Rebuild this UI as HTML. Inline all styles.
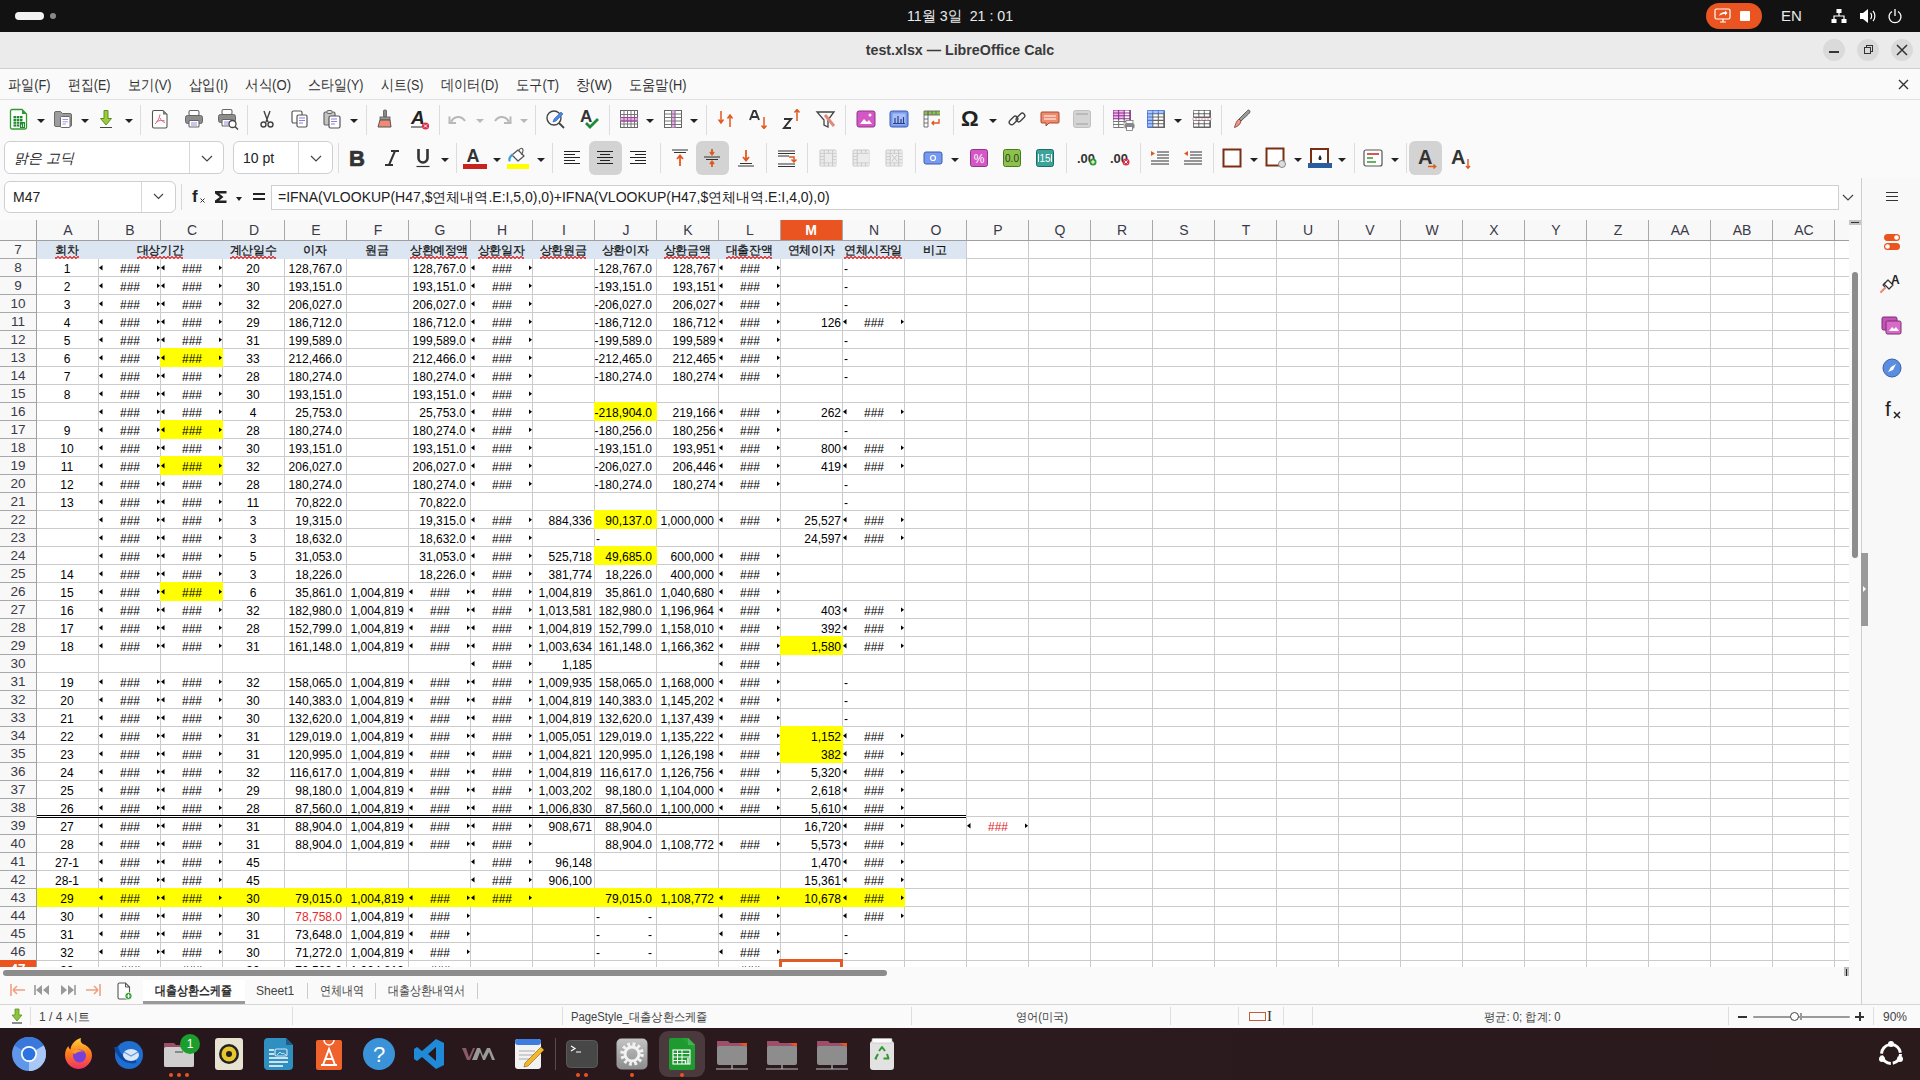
<!DOCTYPE html><html><head><meta charset="utf-8"><style>
*{box-sizing:border-box}
html,body{margin:0;padding:0}
body{width:1920px;height:1080px;overflow:hidden;position:relative;background:#fafafa;font-family:"Liberation Sans",sans-serif;color:#222}
.a{position:absolute}
.t{position:absolute;white-space:nowrap}
.cell{position:absolute;height:18px;line-height:18px;font-size:12px;color:#000;white-space:nowrap}
.tri{position:absolute;width:3.5px;height:5.5px;background:#000}
.tl{clip-path:polygon(0 50%,100% 0,100% 100%)}
.tr{clip-path:polygon(0 0,100% 50%,0 100%)}
.hl{position:absolute;height:1px;background:#cbcbcb}
.vl{position:absolute;width:1px;background:#cbcbcb}
.ch{position:absolute;top:220px;height:20px;line-height:20px;font-size:14px;color:#3a3a48;text-align:center}
.rh{position:absolute;left:0;width:36px;height:18px;line-height:18px;font-size:13.5px;color:#3a3a48;text-align:center}
.sq{position:relative;display:inline-block;line-height:18px}
.sq::after{content:"";position:absolute;left:0;right:0;top:15px;height:3px;background:linear-gradient(135deg,transparent 35%,#e23a3a 35%,#e23a3a 65%,transparent 65%) 0 0/4px 3px repeat-x,linear-gradient(45deg,transparent 35%,#e23a3a 35%,#e23a3a 65%,transparent 65%) 2px 0/4px 3px repeat-x;opacity:.9}
.menu{position:absolute;top:76px;font-size:14.5px;color:#333;line-height:18px}
</style></head><body>
<div class="a" style="left:0;top:0;width:1920px;height:32px;background:#121212"></div><div class="a" style="left:15px;top:12px;width:29px;height:8px;border-radius:4px;background:#f2f2f2"></div><div class="a" style="left:50px;top:13px;width:6px;height:6px;border-radius:3px;background:#8a8a8a"></div><div class="t" style="left:0;width:1920px;top:7px;text-align:center;font-size:15px;color:#eaeaea;line-height:18px;transform:scaleX(0.945)">11월 3일&nbsp; 21 : 01</div><div class="a" style="left:1706px;top:3px;width:56px;height:26px;border-radius:13px;background:#e95420"></div><div class="t" style="left:1781px;top:7px;font-size:15px;color:#eaeaea;line-height:18px">EN</div><svg class="a" style="left:1714.0px;top:8.0px" width="18" height="16" viewBox="0 0 18 16"><rect x="1" y="1" width="15" height="10" rx="1.5" fill="none" stroke="#fff" stroke-width="1.2"/><path d="M6 14h6M9 11v3" stroke="#fff" stroke-width="1.2"/><path d="M5 8c1-3 3-4 6-4v-1.5l2.5 2.5-2.5 2.5V6c-2 0-4 .5-6 2z" fill="#fff"/></svg><div class="a" style="left:1740px;top:11px;width:10px;height:10px;background:#fff;border-radius:1px"></div><svg class="a" style="left:1831.0px;top:8.0px" width="16" height="16" viewBox="0 0 16 16"><rect x="5.5" y="1" width="5" height="4" fill="#fff"/><rect x="0.5" y="11" width="5" height="4" fill="#fff"/><rect x="10.5" y="11" width="5" height="4" fill="#fff"/><path d="M8 5v3M3 11V8h10v3" stroke="#fff" stroke-width="1.2" fill="none"/></svg><svg class="a" style="left:1859.0px;top:8.0px" width="18" height="16" viewBox="0 0 18 16"><path d="M1 5h3l5-4v14l-5-4H1z" fill="#fff"/><path d="M11.5 5c1.5 1.5 1.5 4.5 0 6M14 3c2.5 2.5 2.5 7.5 0 10" stroke="#fff" stroke-width="1.2" fill="none"/></svg><svg class="a" style="left:1887.0px;top:8.0px" width="16" height="16" viewBox="0 0 16 16"><path d="M5 3.5a6 6 0 1 0 6 0" stroke="#fff" stroke-width="1.3" fill="none"/><path d="M8 1v7" stroke="#fff" stroke-width="1.3"/></svg><div class="a" style="left:0;top:32px;width:1920px;height:37px;background:#ebebeb;border-bottom:1px solid #cfcfcf"></div><div class="t" style="left:0;width:1920px;top:41px;text-align:center;font-size:15px;font-weight:bold;color:#3a3a3a;line-height:18px;transform:scaleX(0.95)">test.xlsx — LibreOffice Calc</div><div class="a" style="left:1823px;top:39px;width:22px;height:22px;border-radius:11px;background:#dadada"></div><div class="a" style="left:1857px;top:39px;width:22px;height:22px;border-radius:11px;background:#dadada"></div><div class="a" style="left:1891px;top:39px;width:22px;height:22px;border-radius:11px;background:#dadada"></div><div class="a" style="left:1829px;top:51px;width:10px;height:1.5px;background:#333"></div><div class="a" style="left:1866px;top:45px;width:7px;height:7px;border:1.3px solid #333"></div><div class="a" style="left:1864px;top:47px;width:7px;height:7px;border:1.3px solid #333;background:#dadada"></div><svg class="a" style="left:1896px;top:44px" width="12" height="12"><path d="M1 1L11 11M11 1L1 11" stroke="#333" stroke-width="1.5"/></svg><div class="a" style="left:0;top:69px;width:1920px;height:31px;background:#fafafa;border-bottom:1px solid #e2e2e2"></div><div class="menu" style="left:8px;transform:scaleX(0.876);transform-origin:0 0">파일(F)</div><div class="menu" style="left:68px;transform:scaleX(0.862);transform-origin:0 0">편집(E)</div><div class="menu" style="left:128px;transform:scaleX(0.882);transform-origin:0 0">보기(V)</div><div class="menu" style="left:189px;transform:scaleX(0.892);transform-origin:0 0">삽입(I)</div><div class="menu" style="left:245px;transform:scaleX(0.904);transform-origin:0 0">서식(O)</div><div class="menu" style="left:308px;transform:scaleX(0.863);transform-origin:0 0">스타일(Y)</div><div class="menu" style="left:381px;transform:scaleX(0.862);transform-origin:0 0">시트(S)</div><div class="menu" style="left:441px;transform:scaleX(0.883);transform-origin:0 0">데이터(D)</div><div class="menu" style="left:516px;transform:scaleX(0.887);transform-origin:0 0">도구(T)</div><div class="menu" style="left:576px;transform:scaleX(0.940);transform-origin:0 0">창(W)</div><div class="menu" style="left:629px;transform:scaleX(0.883);transform-origin:0 0">도움말(H)</div><svg class="a" style="left:1898px;top:79px" width="11" height="11"><path d="M1 1L10 10M10 1L1 10" stroke="#333" stroke-width="1.4"/></svg><svg class="a" style="left:9.0px;top:108.0px" width="20" height="22" viewBox="0 0 20 22"><path d="M3 1.5h10l4.5 4.5v13.5a1.5 1.5 0 0 1-1.5 1.5H3a1.5 1.5 0 0 1-1.5-1.5V3A1.5 1.5 0 0 1 3 1.5z" fill="#fff" stroke="#2f9a2f" stroke-width="1.3"/><path d="M13 1.5l4.5 4.5H13z" fill="#2f9a2f"/><rect x="4.5" y="8.0" width="2.6" height="2.2" fill="#1f8a2f"/><rect x="4.5" y="10.8" width="2.6" height="2.2" fill="#1f8a2f"/><rect x="4.5" y="13.6" width="2.6" height="2.2" fill="#1f8a2f"/><rect x="4.5" y="16.4" width="2.6" height="2.2" fill="#1f8a2f"/><rect x="7.7" y="8.0" width="2.6" height="2.2" fill="#1f8a2f"/><rect x="7.7" y="10.8" width="2.6" height="2.2" fill="#1f8a2f"/><rect x="7.7" y="13.6" width="2.6" height="2.2" fill="#1f8a2f"/><rect x="7.7" y="16.4" width="2.6" height="2.2" fill="#1f8a2f"/><rect x="10.9" y="8.0" width="2.6" height="2.2" fill="#1f8a2f"/><rect x="10.9" y="10.8" width="2.6" height="2.2" fill="#1f8a2f"/><rect x="10.9" y="13.6" width="2.6" height="2.2" fill="#1f8a2f"/><rect x="10.9" y="16.4" width="2.6" height="2.2" fill="#1f8a2f"/><rect x="11" y="14" width="5" height="6" fill="#1f8a2f"/><path d="M12.5 19v-2.5M14.5 19v-3.5" stroke="#fff" stroke-width="0.8"/></svg><div class="a" style="left:37px;top:119px;width:0;height:0;border-left:4px solid transparent;border-right:4px solid transparent;border-top:4px solid #222"></div><svg class="a" style="left:53.0px;top:109.0px" width="20" height="20" viewBox="0 0 20 20"><path d="M1.5 4a1.5 1.5 0 0 1 1.5-1.5h4.5l2 2H17a1.5 1.5 0 0 1 1.5 1.5v10a1.5 1.5 0 0 1-1.5 1.5H3A1.5 1.5 0 0 1 1.5 16z" fill="#9d9d9d" stroke="#6a6a6a" stroke-width="1"/><rect x="7.5" y="7.5" width="9.5" height="11" rx="1" fill="#fff" stroke="#6a6a6a" stroke-width="1"/><path d="M9.5 10.5h5.5M9.5 12.8h5.5M9.5 15h3.5" stroke="#8a7fd9" stroke-width="0.8"/></svg><div class="a" style="left:81px;top:119px;width:0;height:0;border-left:4px solid transparent;border-right:4px solid transparent;border-top:4px solid #222"></div><svg class="a" style="left:96.0px;top:109.0px" width="20" height="20" viewBox="0 0 20 20"><path d="M8 1.5h4v8h3.5L10 16 4.5 9.5H8z" fill="#9ccc3c" stroke="#5f8f26" stroke-width="1" stroke-linejoin="round"/><path d="M4 18.5h12" stroke="#444" stroke-width="1"/></svg><div class="a" style="left:125px;top:119px;width:0;height:0;border-left:4px solid transparent;border-right:4px solid transparent;border-top:4px solid #222"></div><div class="a" style="left:140px;top:105px;width:1px;height:30px;background:#dcdcdc"></div><svg class="a" style="left:151.0px;top:109.0px" width="18" height="20" viewBox="0 0 18 20"><path d="M3 1.5h9l4 4v12a1.5 1.5 0 0 1-1.5 1.5H3a1.5 1.5 0 0 1-1.5-1.5V3A1.5 1.5 0 0 1 3 1.5z" fill="#fff" stroke="#555" stroke-width="1.1"/><path d="M12 1.5v4h4z" fill="#777"/><path d="M9 5.5c-.5 3.5-2.5 7.5-5 9.5M9 9c1 2.5 3 4 5 4.5M5.5 12.5c2.5-1 5-1.2 8-.8" stroke="#e0607a" stroke-width="1" fill="none"/></svg><svg class="a" style="left:184.0px;top:109.0px" width="20" height="20" viewBox="0 0 20 20"><rect x="5" y="1.5" width="10" height="5" rx="1.5" fill="#fff" stroke="#666" stroke-width="1.1"/><rect x="1.5" y="6.5" width="17" height="8" rx="2" fill="#8d8d8d" stroke="#666"/><rect x="5" y="11.5" width="10" height="6.5" rx="1" fill="#fff" stroke="#666" stroke-width="1.1"/><path d="M7 14h6M7 16h6" stroke="#8a7fd9" stroke-width="0.9"/></svg><svg class="a" style="left:217.0px;top:108.0px" width="22" height="22" viewBox="0 0 22 22"><rect x="5" y="1.5" width="10" height="5" rx="1.5" fill="#fff" stroke="#666" stroke-width="1.1"/><rect x="1.5" y="6.5" width="17" height="8" rx="2" fill="#8d8d8d" stroke="#666"/><rect x="5" y="11.5" width="10" height="6.5" rx="1" fill="#fff" stroke="#666" stroke-width="1.1"/><path d="M7 14h6M7 16h6" stroke="#8a7fd9" stroke-width="0.9"/><circle cx="15.5" cy="16" r="3.5" fill="#fff" stroke="#444" stroke-width="1.3"/><path d="M18 18.5l3 3" stroke="#444" stroke-width="1.5"/></svg><div class="a" style="left:247px;top:105px;width:1px;height:30px;background:#dcdcdc"></div><svg class="a" style="left:259.0px;top:109.0px" width="16" height="20" viewBox="0 0 16 20"><path d="M5 2l4 11M11 2L7 13" stroke="#444" stroke-width="1.4"/><circle cx="4.5" cy="15.5" r="2.5" fill="none" stroke="#444" stroke-width="1.4"/><circle cx="11.5" cy="15.5" r="2.5" fill="none" stroke="#444" stroke-width="1.4"/></svg><svg class="a" style="left:290.0px;top:109.0px" width="20" height="20" viewBox="0 0 20 20"><rect x="2" y="2" width="10" height="12" rx="1.5" fill="#fff" stroke="#555" stroke-width="1.2"/><rect x="7" y="6" width="10" height="12" rx="1.5" fill="#fff" stroke="#555" stroke-width="1.2"/><path d="M9 9h6M9 11.5h6M9 14h4" stroke="#8a7fd9" stroke-width="1"/></svg><svg class="a" style="left:322.0px;top:109.0px" width="20" height="20" viewBox="0 0 20 20"><rect x="2" y="3" width="11" height="13" rx="1.5" fill="#c4c4c4" stroke="#666" stroke-width="1.2"/><rect x="5" y="1.5" width="5" height="3" rx="1" fill="#ddd" stroke="#666"/><rect x="7" y="7" width="11" height="12" rx="1.5" fill="#fff" stroke="#555" stroke-width="1.2"/><path d="M9 10h6M9 12.5h6M9 15h4" stroke="#8a7fd9" stroke-width="1"/></svg><div class="a" style="left:350px;top:119px;width:0;height:0;border-left:4px solid transparent;border-right:4px solid transparent;border-top:4px solid #222"></div><div class="a" style="left:366px;top:105px;width:1px;height:30px;background:#dcdcdc"></div><svg class="a" style="left:376.0px;top:109.0px" width="18" height="20" viewBox="0 0 18 20"><rect x="7.5" y="1" width="3" height="7" rx="1" fill="#888" stroke="#555" stroke-width="0.8"/><rect x="4" y="8" width="10" height="3" fill="#999" stroke="#555" stroke-width="0.8"/><path d="M4 11h10l1 7H2z" fill="#ef8a74" stroke="#555" stroke-width="1"/></svg><svg class="a" style="left:409.0px;top:107.0px" width="22" height="24" viewBox="0 0 22 24"><text x="2" y="17" font-size="19" font-weight="bold" font-style="italic" fill="#222" font-family="Liberation Sans">A</text><path d="M2 20h11" stroke="#222" stroke-width="1"/><circle cx="16.5" cy="19" r="3.6" fill="#d9304b"/><path d="M15 17.5l3 3M18 17.5l-3 3" stroke="#fff" stroke-width="1"/></svg><div class="a" style="left:439px;top:105px;width:1px;height:30px;background:#dcdcdc"></div><svg class="a" style="left:448.0px;top:111.0px" width="20" height="16" viewBox="0 0 20 16"><path d="M3 11c3-6 10-7 14-1" stroke="#b8b8b8" stroke-width="2" fill="none"/><path d="M1.5 5.5v6.5h6.5" stroke="#b8b8b8" stroke-width="2" fill="none"/></svg><div class="a" style="left:476px;top:119px;width:0;height:0;border-left:4px solid transparent;border-right:4px solid transparent;border-top:4px solid #b8b8b8"></div><svg class="a" style="left:492.0px;top:111.0px" width="20" height="16" viewBox="0 0 20 16"><path d="M17 11c-3-6-10-7-14-1" stroke="#b8b8b8" stroke-width="2" fill="none"/><path d="M18.5 5.5v6.5h-6.5" stroke="#b8b8b8" stroke-width="2" fill="none"/></svg><div class="a" style="left:520px;top:119px;width:0;height:0;border-left:4px solid transparent;border-right:4px solid transparent;border-top:4px solid #b8b8b8"></div><div class="a" style="left:535px;top:105px;width:1px;height:30px;background:#dcdcdc"></div><svg class="a" style="left:545.0px;top:108.0px" width="22" height="22" viewBox="0 0 22 22"><circle cx="9" cy="10" r="7" fill="none" stroke="#444" stroke-width="1.4"/><path d="M14 15l5 5" stroke="#444" stroke-width="1.8"/><path d="M9 11l7-7 2 2-7 7-3 1z" fill="#4a86e8" stroke="#2a5bb0" stroke-width="0.6"/></svg><svg class="a" style="left:579.0px;top:107.0px" width="22" height="24" viewBox="0 0 22 24"><text x="1" y="15" font-size="17" font-weight="bold" fill="#333" font-family="Liberation Sans">A</text><path d="M7 16l4 4 8-8" stroke="#1f8a3a" stroke-width="2.8" fill="none"/></svg><div class="a" style="left:609px;top:105px;width:1px;height:30px;background:#dcdcdc"></div><svg class="a" style="left:619.0px;top:109.0px" width="20" height="20" viewBox="0 0 20 20"><rect x="1.5" y="1.5" width="17" height="17" fill="#fff" stroke="#666"/><rect x="1.5" y="8" width="17" height="4.5" fill="#f2a6f2"/><path d="M1.5 5.5h17M1.5 8.5h17M1.5 12h17M1.5 15h17M5 1.5v17M8.5 1.5v17M12 1.5v17M15.5 1.5v17" stroke="#777" stroke-width="1" fill="none"/><path d="M1.5 8.5h17M1.5 12h17" stroke="#a040a0" stroke-width="1"/></svg><div class="a" style="left:646px;top:119px;width:0;height:0;border-left:4px solid transparent;border-right:4px solid transparent;border-top:4px solid #222"></div><svg class="a" style="left:663.0px;top:109.0px" width="20" height="20" viewBox="0 0 20 20"><rect x="1.5" y="1.5" width="17" height="17" fill="#fff" stroke="#666"/><rect x="8" y="1.5" width="4.5" height="17" fill="#f2a6f2"/><path d="M1.5 5h17M1.5 8.5h17M1.5 12h17M1.5 15.5h17M8.5 1.5v17M12 1.5v17" stroke="#777" stroke-width="1" fill="none"/></svg><div class="a" style="left:690px;top:119px;width:0;height:0;border-left:4px solid transparent;border-right:4px solid transparent;border-top:4px solid #222"></div><div class="a" style="left:706px;top:105px;width:1px;height:30px;background:#dcdcdc"></div><svg class="a" style="left:717.0px;top:109.0px" width="18" height="20" viewBox="0 0 18 20"><path d="M4 2v11M1.5 10.5L4 14l2.5-3.5M13 18V7M10.5 9.5L13 6l2.5 3.5" stroke="#e2581f" stroke-width="1.5" fill="none"/></svg><svg class="a" style="left:749.0px;top:109.0px" width="20" height="20" viewBox="0 0 20 20"><path d="M1 11L4.5 2h2L10 11M3 8h5" stroke="#333" stroke-width="1.9" fill="none"/><path d="M15 8v11M12.5 16.5L15 19.5l2.5-3" stroke="#e2581f" stroke-width="1.5" fill="none"/></svg><svg class="a" style="left:782.0px;top:109.0px" width="20" height="20" viewBox="0 0 20 20"><path d="M2 10h7L2 19h7" stroke="#333" stroke-width="2" fill="none"/><path d="M15 12V1M12.5 3.5L15 0.5l2.5 3" stroke="#e2581f" stroke-width="1.5" fill="none"/></svg><svg class="a" style="left:815.0px;top:109.0px" width="22" height="20" viewBox="0 0 22 20"><path d="M2 3h17l-6 8v7l-4-2v-5z" fill="none" stroke="#444" stroke-width="1.3"/><path d="M10 6l9 11" stroke="#e08b7a" stroke-width="3"/></svg><div class="a" style="left:845px;top:105px;width:1px;height:30px;background:#dcdcdc"></div><svg class="a" style="left:856.0px;top:109.0px" width="20" height="20" viewBox="0 0 20 20"><rect x="1" y="2" width="18" height="16" rx="2" fill="#d557c6" stroke="#8e3685"/><path d="M4 15l4-5 3 3 2-2 3 4z" fill="#fff"/><circle cx="14" cy="6" r="1.5" fill="#fff"/></svg><svg class="a" style="left:889.0px;top:109.0px" width="20" height="20" viewBox="0 0 20 20"><rect x="1" y="2" width="18" height="16" rx="2" fill="#7799ee" stroke="#3d5bb5"/><rect x="3.5" y="4.5" width="13" height="11" fill="#a9c0f7"/><path d="M6 14V9M9 14V7M12 14v-4M14.5 14V8M4 14.5h12" stroke="#2a3f8a" stroke-width="1.2"/></svg><svg class="a" style="left:922.0px;top:109.0px" width="20" height="20" viewBox="0 0 20 20"><path d="M2 2h16v4H2z" fill="#8bc34a"/><path d="M2 2h16M2 6h16M6 2v4M10 2v4M14 2v4M2 2v16M6 2v16" stroke="#666" stroke-width="0.9" fill="none"/><path d="M2 10h4M2 14h4M2 18h4" stroke="#666" stroke-width="0.9"/><path d="M17 10v4h-7M12 12l-2 2 2 2" stroke="#e2581f" stroke-width="1.4" fill="none"/></svg><div class="a" style="left:953px;top:105px;width:1px;height:30px;background:#dcdcdc"></div><div class="t" style="left:961px;top:107px;font-size:22px;font-weight:bold;color:#222;line-height:24px">Ω</div><div class="a" style="left:989px;top:119px;width:0;height:0;border-left:4px solid transparent;border-right:4px solid transparent;border-top:4px solid #222"></div><svg class="a" style="left:1007.0px;top:109.0px" width="20" height="20" viewBox="0 0 20 20"><rect x="1.5" y="9" width="10" height="5" rx="2.5" transform="rotate(-45 6.5 11.5)" fill="none" stroke="#444" stroke-width="1.4"/><rect x="8.5" y="6" width="10" height="5" rx="2.5" transform="rotate(-45 13.5 8.5)" fill="none" stroke="#444" stroke-width="1.4"/></svg><svg class="a" style="left:1040.0px;top:109.0px" width="20" height="20" viewBox="0 0 20 20"><path d="M2 3h16a1 1 0 0 1 1 1v9a1 1 0 0 1-1 1H9l-3 3v-3H2a1 1 0 0 1-1-1V4a1 1 0 0 1 1-1z" fill="#f08a6c" stroke="#a5492e"/><path d="M4 7h12M4 10h12" stroke="#fff" stroke-width="1.2"/></svg><svg class="a" style="left:1073.0px;top:110.0px" width="18" height="18" viewBox="0 0 18 18"><rect x="0.5" y="0.5" width="17" height="17" rx="2" fill="#d4d4d4" stroke="#c0c0c0"/><path d="M3 4h12M3 14h12" stroke="#b0b0b0" stroke-width="1.5"/></svg><div class="a" style="left:1103px;top:105px;width:1px;height:30px;background:#dcdcdc"></div><svg class="a" style="left:1112.0px;top:108.5px" width="24" height="23" viewBox="0 0 24 23"><rect x="1" y="1" width="17.8" height="18" rx="1" fill="#777"/><rect x="1" y="1" width="17.8" height="10" fill="#8a2c8a" opacity="0.85"/><rect x="1.5" y="1.5" width="4.6" height="1.9" rx="0.5" fill="#f4b0f4"/><rect x="7.1" y="1.5" width="4.6" height="1.9" rx="0.5" fill="#f4b0f4"/><rect x="12.7" y="1.5" width="4.6" height="1.9" rx="0.5" fill="#fff"/><rect x="1.5" y="4.4" width="4.6" height="1.9" rx="0.5" fill="#f4b0f4"/><rect x="7.1" y="4.4" width="4.6" height="1.9" rx="0.5" fill="#f4b0f4"/><rect x="12.7" y="4.4" width="4.6" height="1.9" rx="0.5" fill="#fff"/><rect x="1.5" y="7.3" width="4.6" height="1.9" rx="0.5" fill="#f4b0f4"/><rect x="7.1" y="7.3" width="4.6" height="1.9" rx="0.5" fill="#f4b0f4"/><rect x="12.7" y="7.3" width="4.6" height="1.9" rx="0.5" fill="#fff"/><rect x="1.5" y="10.2" width="4.6" height="1.9" rx="0.5" fill="#fff"/><rect x="7.1" y="10.2" width="4.6" height="1.9" rx="0.5" fill="#fff"/><rect x="12.7" y="10.2" width="4.6" height="1.9" rx="0.5" fill="#fff"/><rect x="1.5" y="13.1" width="4.6" height="1.9" rx="0.5" fill="#fff"/><rect x="7.1" y="13.1" width="4.6" height="1.9" rx="0.5" fill="#fff"/><rect x="12.7" y="13.1" width="4.6" height="1.9" rx="0.5" fill="#fff"/><rect x="1.5" y="16.0" width="4.6" height="1.9" rx="0.5" fill="#fff"/><rect x="7.1" y="16.0" width="4.6" height="1.9" rx="0.5" fill="#fff"/><rect x="12.7" y="16.0" width="4.6" height="1.9" rx="0.5" fill="#fff"/><rect x="12" y="14" width="11" height="6" rx="2" fill="#888" stroke="#fff" stroke-width="0.8"/><rect x="14" y="11.5" width="7" height="3" fill="#fff" stroke="#777" stroke-width="0.8"/><rect x="14.5" y="17.5" width="6" height="4" fill="#fff" stroke="#777" stroke-width="0.8"/></svg><svg class="a" style="left:1146.0px;top:109.0px" width="20" height="20" viewBox="0 0 20 20"><rect x="1" y="1" width="18" height="18" rx="1" fill="#4a72d8"/><rect x="6.5" y="4.5" width="12.5" height="14.5" fill="#666"/><rect x="1.8" y="1.8" width="4.5" height="2.35" rx="0.4" fill="#a9c6f7"/><rect x="7.3" y="1.8" width="4.5" height="2.35" rx="0.4" fill="#a9c6f7"/><rect x="12.8" y="1.8" width="4.5" height="2.35" rx="0.4" fill="#a9c6f7"/><rect x="1.8" y="5.2" width="4.5" height="2.35" rx="0.4" fill="#a9c6f7"/><rect x="7.3" y="5.2" width="4.5" height="2.35" rx="0.4" fill="#fff"/><rect x="12.8" y="5.2" width="4.5" height="2.35" rx="0.4" fill="#fff"/><rect x="1.8" y="8.5" width="4.5" height="2.35" rx="0.4" fill="#a9c6f7"/><rect x="7.3" y="8.5" width="4.5" height="2.35" rx="0.4" fill="#fff"/><rect x="12.8" y="8.5" width="4.5" height="2.35" rx="0.4" fill="#fff"/><rect x="1.8" y="11.9" width="4.5" height="2.35" rx="0.4" fill="#a9c6f7"/><rect x="7.3" y="11.9" width="4.5" height="2.35" rx="0.4" fill="#fff"/><rect x="12.8" y="11.9" width="4.5" height="2.35" rx="0.4" fill="#fff"/><rect x="1.8" y="15.2" width="4.5" height="2.35" rx="0.4" fill="#a9c6f7"/><rect x="7.3" y="15.2" width="4.5" height="2.35" rx="0.4" fill="#fff"/><rect x="12.8" y="15.2" width="4.5" height="2.35" rx="0.4" fill="#fff"/></svg><div class="a" style="left:1174px;top:119px;width:0;height:0;border-left:4px solid transparent;border-right:4px solid transparent;border-top:4px solid #222"></div><svg class="a" style="left:1192.0px;top:109.0px" width="20" height="20" viewBox="0 0 20 20"><rect x="1" y="1" width="18" height="8" rx="1" fill="#666"/><rect x="1" y="11" width="18" height="8" rx="1" fill="#666"/><rect x="1.8" y="1.8" width="4.5" height="2.4" rx="0.4" fill="#fff"/><rect x="7.3" y="1.8" width="4.5" height="2.4" rx="0.4" fill="#fff"/><rect x="12.8" y="1.8" width="4.5" height="2.4" rx="0.4" fill="#fff"/><rect x="1.8" y="5.2" width="4.5" height="2.4" rx="0.4" fill="#fff"/><rect x="7.3" y="5.2" width="4.5" height="2.4" rx="0.4" fill="#fff"/><rect x="12.8" y="5.2" width="4.5" height="2.4" rx="0.4" fill="#fff"/><rect x="1.8" y="11.8" width="4.5" height="2.4" rx="0.4" fill="#fff"/><rect x="7.3" y="11.8" width="4.5" height="2.4" rx="0.4" fill="#fff"/><rect x="12.8" y="11.8" width="4.5" height="2.4" rx="0.4" fill="#fff"/><rect x="1.8" y="15.2" width="4.5" height="2.4" rx="0.4" fill="#fff"/><rect x="7.3" y="15.2" width="4.5" height="2.4" rx="0.4" fill="#fff"/><rect x="12.8" y="15.2" width="4.5" height="2.4" rx="0.4" fill="#fff"/><path d="M0 10h20" stroke="#e88aa8" stroke-width="0.9" stroke-dasharray="2 1"/></svg><div class="a" style="left:1221px;top:105px;width:1px;height:30px;background:#dcdcdc"></div><svg class="a" style="left:1232.0px;top:109.0px" width="20" height="20" viewBox="0 0 20 20"><path d="M17.5 1.5c1 1 .5 2-1 3.5L9 12l-2-2 7.5-7.5c1.5-1.5 2-2 3-1z" fill="#9a9a9a" stroke="#555" stroke-width="0.9"/><path d="M7 10l2 2c-.5 3-3 5.5-6.5 6.5C3.5 15 4.5 11.5 7 10z" fill="#f09888" stroke="#7a3a2a" stroke-width="0.8"/></svg><div class="a" style="left:4px;top:141px;width:220px;height:33px;border:1px solid #cfcfcf;border-radius:6px;background:#fff"></div><div class="a" style="left:189px;top:142px;width:1px;height:31px;background:#d8d8d8"></div><div class="t" style="left:14px;top:149px;font-size:14px;color:#222;line-height:18px;font-style:italic">맑은 고딕</div><svg class="a" style="left:201px;top:155px" width="12" height="7"><path d="M1 1L6 6L11 1" stroke="#444" stroke-width="1.2" fill="none"/></svg><div class="a" style="left:233px;top:141px;width:100px;height:33px;border:1px solid #cfcfcf;border-radius:6px;background:#fff"></div><div class="a" style="left:298px;top:142px;width:1px;height:31px;background:#d8d8d8"></div><div class="t" style="left:243px;top:149px;font-size:14px;color:#222;line-height:18px">10 pt</div><svg class="a" style="left:310px;top:155px" width="12" height="7"><path d="M1 1L6 6L11 1" stroke="#444" stroke-width="1.2" fill="none"/></svg><div class="a" style="left:338px;top:143px;width:1px;height:30px;background:#dcdcdc"></div><svg class="a" style="left:347.0px;top:146.0px" width="22" height="24" viewBox="0 0 22 24"><text x="2" y="19.5" font-size="22" font-weight="bold" fill="#333" stroke="#333" stroke-width="0.7" font-family="Liberation Sans">B</text></svg><svg class="a" style="left:383.0px;top:148.0px" width="18" height="20" viewBox="0 0 18 20"><path d="M8 3h8M2 17h8M12 3L6 17" stroke="#333" stroke-width="2" fill="none"/></svg><svg class="a" style="left:415.0px;top:147.0px" width="16" height="22" viewBox="0 0 16 22"><path d="M3.5 2v9a4.5 4.5 0 0 0 9 0V2" stroke="#333" stroke-width="2.6" fill="none"/><path d="M1.5 19.5h13" stroke="#333" stroke-width="1.2"/></svg><div class="a" style="left:441px;top:158px;width:0;height:0;border-left:4px solid transparent;border-right:4px solid transparent;border-top:4px solid #222"></div><div class="a" style="left:456px;top:143px;width:1px;height:30px;background:#dcdcdc"></div><svg class="a" style="left:463.0px;top:146.0px" width="24" height="24" viewBox="0 0 24 24"><text x="3.5" y="16" font-size="18" font-weight="bold" fill="#333" font-family="Liberation Sans">A</text><rect x="0" y="18" width="24" height="5" fill="#c9211e"/></svg><div class="a" style="left:493px;top:158px;width:0;height:0;border-left:4px solid transparent;border-right:4px solid transparent;border-top:4px solid #222"></div><svg class="a" style="left:506.0px;top:146.0px" width="24" height="24" viewBox="0 0 24 24"><path d="M6 9l6-5 6 6-6 5z" fill="#fff" stroke="#555" stroke-width="1.3" stroke-linejoin="round"/><path d="M13 4.5c1-3 4-3 4 0s-2 4-2 4" stroke="#555" stroke-width="1.1" fill="none"/><path d="M6 9c-2 1.5-3 3.5-2.5 5.5" stroke="#3aa1d8" stroke-width="2.2" fill="none" stroke-linecap="round"/><rect x="1" y="18" width="22" height="5" fill="#ffff00"/></svg><div class="a" style="left:537px;top:158px;width:0;height:0;border-left:4px solid transparent;border-right:4px solid transparent;border-top:4px solid #222"></div><div class="a" style="left:552px;top:143px;width:1px;height:30px;background:#dcdcdc"></div><svg class="a" style="left:563.0px;top:149.0px" width="18" height="18" viewBox="0 0 18 18"><path d="M1 2.5h16" stroke="#222" stroke-width="1"/><path d="M1 5.5h11" stroke="#222" stroke-width="1"/><path d="M1 8.5h16" stroke="#222" stroke-width="1"/><path d="M1 11.5h11" stroke="#222" stroke-width="1"/><path d="M1 14.5h16" stroke="#222" stroke-width="1"/></svg><div class="a" style="left:589px;top:141px;width:33px;height:34px;border-radius:6px;background:#d3d3d3"></div><svg class="a" style="left:596.0px;top:149.0px" width="18" height="18" viewBox="0 0 18 18"><path d="M1 2.5h16" stroke="#222" stroke-width="1"/><path d="M4 5.5h10" stroke="#222" stroke-width="1"/><path d="M1 8.5h16" stroke="#222" stroke-width="1"/><path d="M4 11.5h10" stroke="#222" stroke-width="1"/><path d="M1 14.5h16" stroke="#222" stroke-width="1"/></svg><svg class="a" style="left:629.0px;top:149.0px" width="18" height="18" viewBox="0 0 18 18"><path d="M1 2.5h16" stroke="#222" stroke-width="1"/><path d="M6 5.5h11" stroke="#222" stroke-width="1"/><path d="M1 8.5h16" stroke="#222" stroke-width="1"/><path d="M6 11.5h11" stroke="#222" stroke-width="1"/><path d="M1 14.5h16" stroke="#222" stroke-width="1"/></svg><div class="a" style="left:660px;top:143px;width:1px;height:30px;background:#dcdcdc"></div><svg class="a" style="left:670.0px;top:148.0px" width="20" height="20" viewBox="0 0 20 20"><path d="M2 2h16M4 4.5h12" stroke="#333" stroke-width="1.2"/><path d="M10 18V8M7 11l3-3.5 3 3.5" stroke="#e2581f" stroke-width="1.8" fill="none"/></svg><div class="a" style="left:696px;top:141px;width:33px;height:34px;border-radius:6px;background:#d3d3d3"></div><svg class="a" style="left:702.0px;top:147.0px" width="20" height="22" viewBox="0 0 20 22"><path d="M2 10h16M4 12.5h12" stroke="#333" stroke-width="1.2"/><path d="M10 2v5M8 5l2 2.5 2-2.5M10 20v-5M8 17l2-2.5 2 2.5" stroke="#e2581f" stroke-width="1.8" fill="none"/></svg><svg class="a" style="left:736.0px;top:148.0px" width="20" height="20" viewBox="0 0 20 20"><path d="M2 18h16M4 15.5h12" stroke="#333" stroke-width="1.2"/><path d="M10 2v10M7 9l3 3.5 3-3.5" stroke="#e2581f" stroke-width="1.8" fill="none"/></svg><div class="a" style="left:766px;top:143px;width:1px;height:30px;background:#dcdcdc"></div><svg class="a" style="left:777.0px;top:148.0px" width="20" height="20" viewBox="0 0 20 20"><path d="M1 3h17M1 5.5h17M1 8h11M1 16h17M1 18.5h17" stroke="#333" stroke-width="1.1"/><path d="M12 9h5v4M14.5 11.5l2.5 2.5 2.5-2.5" stroke="#e2581f" stroke-width="1.5" fill="none"/></svg><div class="a" style="left:807px;top:143px;width:1px;height:30px;background:#dcdcdc"></div><svg class="a" style="left:819.0px;top:149.0px" width="18" height="18" viewBox="0 0 18 18"><rect x="0.5" y="0.5" width="17" height="17" rx="1.5" fill="#c8c8c8"/><rect x="1.5" y="1.5" width="3.2" height="2.4" fill="#ececec"/><rect x="5.7" y="1.5" width="3.2" height="2.4" fill="#ececec"/><rect x="9.9" y="1.5" width="3.2" height="2.4" fill="#ececec"/><rect x="14.1" y="1.5" width="3.2" height="2.4" fill="#ececec"/><rect x="1.5" y="4.7" width="3.2" height="2.4" fill="#ececec"/><rect x="14.1" y="4.7" width="3.2" height="2.4" fill="#ececec"/><rect x="1.5" y="7.9" width="3.2" height="2.4" fill="#ececec"/><rect x="14.1" y="7.9" width="3.2" height="2.4" fill="#ececec"/><rect x="1.5" y="11.1" width="3.2" height="2.4" fill="#ececec"/><rect x="14.1" y="11.1" width="3.2" height="2.4" fill="#ececec"/><rect x="1.5" y="14.3" width="3.2" height="2.4" fill="#ececec"/><rect x="5.7" y="14.3" width="3.2" height="2.4" fill="#ececec"/><rect x="9.9" y="14.3" width="3.2" height="2.4" fill="#ececec"/><rect x="14.1" y="14.3" width="3.2" height="2.4" fill="#ececec"/><rect x="5.7" y="4.7" width="7.4" height="8.8" fill="#ececec"/></svg><svg class="a" style="left:852.0px;top:149.0px" width="18" height="18" viewBox="0 0 18 18"><rect x="0.5" y="0.5" width="17" height="17" rx="1.5" fill="#c8c8c8"/><rect x="1.5" y="1.5" width="3.2" height="2.4" fill="#ececec"/><rect x="5.7" y="1.5" width="3.2" height="2.4" fill="#ececec"/><rect x="9.9" y="1.5" width="3.2" height="2.4" fill="#ececec"/><rect x="14.1" y="1.5" width="3.2" height="2.4" fill="#ececec"/><rect x="1.5" y="4.7" width="3.2" height="2.4" fill="#ececec"/><rect x="1.5" y="7.9" width="3.2" height="2.4" fill="#ececec"/><rect x="1.5" y="11.1" width="3.2" height="2.4" fill="#ececec"/><rect x="1.5" y="14.3" width="3.2" height="2.4" fill="#ececec"/><rect x="5.7" y="14.3" width="3.2" height="2.4" fill="#ececec"/><rect x="9.9" y="14.3" width="3.2" height="2.4" fill="#ececec"/><rect x="14.1" y="14.3" width="3.2" height="2.4" fill="#ececec"/><rect x="5.7" y="4.7" width="11.6" height="8.8" fill="#ececec"/></svg><svg class="a" style="left:885.0px;top:149.0px" width="18" height="18" viewBox="0 0 18 18"><rect x="0.5" y="0.5" width="17" height="17" rx="1.5" fill="#c8c8c8"/><rect x="1.5" y="1.5" width="3.2" height="2.4" fill="#ececec"/><rect x="5.7" y="1.5" width="3.2" height="2.4" fill="#ececec"/><rect x="9.9" y="1.5" width="3.2" height="2.4" fill="#ececec"/><rect x="14.1" y="1.5" width="3.2" height="2.4" fill="#ececec"/><rect x="1.5" y="4.7" width="3.2" height="2.4" fill="#ececec"/><rect x="14.1" y="4.7" width="3.2" height="2.4" fill="#ececec"/><rect x="1.5" y="7.9" width="3.2" height="2.4" fill="#ececec"/><rect x="14.1" y="7.9" width="3.2" height="2.4" fill="#ececec"/><rect x="1.5" y="11.1" width="3.2" height="2.4" fill="#ececec"/><rect x="14.1" y="11.1" width="3.2" height="2.4" fill="#ececec"/><rect x="1.5" y="14.3" width="3.2" height="2.4" fill="#ececec"/><rect x="5.7" y="14.3" width="3.2" height="2.4" fill="#ececec"/><rect x="9.9" y="14.3" width="3.2" height="2.4" fill="#ececec"/><rect x="14.1" y="14.3" width="3.2" height="2.4" fill="#ececec"/><rect x="5.7" y="4.7" width="7.4" height="8.8" fill="#ececec"/><path d="M7 6l5 6M12 6l-5 6" stroke="#c8c8c8" stroke-width="1"/></svg><div class="a" style="left:915px;top:143px;width:1px;height:30px;background:#dcdcdc"></div><svg class="a" style="left:923.0px;top:151.0px" width="20" height="14" viewBox="0 0 20 14"><rect x="1" y="1" width="18" height="12" rx="2" fill="#7799ee" stroke="#3d5bb5"/><circle cx="10" cy="7" r="2.5" fill="none" stroke="#fff" stroke-width="1.2"/></svg><div class="a" style="left:951px;top:158px;width:0;height:0;border-left:4px solid transparent;border-right:4px solid transparent;border-top:4px solid #222"></div><svg class="a" style="left:970.0px;top:149.0px" width="18" height="18" viewBox="0 0 18 18"><rect x="0.5" y="0.5" width="17" height="17" rx="2" fill="#d557c6" stroke="#8e3685"/><text x="9" y="13.5" font-size="12" fill="#fff" text-anchor="middle" font-family="Liberation Sans">%</text></svg><svg class="a" style="left:1003.0px;top:149.0px" width="18" height="18" viewBox="0 0 18 18"><rect x="0.5" y="0.5" width="17" height="17" rx="2" fill="#8bc34a" stroke="#4d7a1f"/><text x="9" y="13" font-size="10" fill="#333" text-anchor="middle" font-family="Liberation Sans">0.0</text></svg><svg class="a" style="left:1036.0px;top:149.0px" width="18" height="18" viewBox="0 0 18 18"><rect x="0.5" y="0.5" width="17" height="17" rx="2" fill="#3aa39a" stroke="#1f6b64"/><text x="9" y="13" font-size="10" fill="#fff" text-anchor="middle" font-family="Liberation Sans">15</text><path d="M2.5 5v8M15.5 5v8" stroke="#fff"/></svg><div class="a" style="left:1066px;top:143px;width:1px;height:30px;background:#dcdcdc"></div><svg class="a" style="left:1076.0px;top:149.0px" width="22" height="18" viewBox="0 0 22 18"><text x="1" y="14" font-size="13" font-weight="bold" fill="#333" font-family="Liberation Sans">.00</text><circle cx="17" cy="13" r="3.5" fill="#2f9a2f"/><path d="M15 13h4M17 11v4" stroke="#fff" stroke-width="1.1"/></svg><svg class="a" style="left:1109.0px;top:149.0px" width="22" height="18" viewBox="0 0 22 18"><text x="1" y="14" font-size="13" font-weight="bold" fill="#333" font-family="Liberation Sans">.00</text><circle cx="17" cy="13" r="3.5" fill="#d9304b"/><path d="M15.5 11.5l3 3M18.5 11.5l-3 3" stroke="#fff" stroke-width="1"/></svg><div class="a" style="left:1140px;top:143px;width:1px;height:30px;background:#dcdcdc"></div><svg class="a" style="left:1150.0px;top:149.0px" width="20" height="18" viewBox="0 0 20 18"><path d="M1 2l4 2.5L1 7z" fill="#e2581f"/><path d="M7 3h12M7 6h12M7 9h12M1 12h18M1 15h18" stroke="#333" stroke-width="1.2"/></svg><svg class="a" style="left:1183.0px;top:149.0px" width="20" height="18" viewBox="0 0 20 18"><path d="M5 2L1 4.5 5 7z" fill="#e2581f"/><path d="M7 3h12M7 6h12M7 9h12M1 12h18M1 15h18" stroke="#333" stroke-width="1.2"/></svg><div class="a" style="left:1213px;top:143px;width:1px;height:30px;background:#dcdcdc"></div><svg class="a" style="left:1222.0px;top:148.0px" width="20" height="20" viewBox="0 0 20 20"><rect x="1.5" y="1.5" width="17" height="17" fill="#fff" stroke="#7a2e12" stroke-width="2"/></svg><div class="a" style="left:1250px;top:158px;width:0;height:0;border-left:4px solid transparent;border-right:4px solid transparent;border-top:4px solid #222"></div><svg class="a" style="left:1265.0px;top:147.0px" width="22" height="22" viewBox="0 0 22 22"><rect x="1.5" y="1.5" width="17" height="17" fill="#fff" stroke="#7a2e12" stroke-width="2"/><circle cx="17" cy="17" r="3.5" fill="#ddd" stroke="#888"/></svg><div class="a" style="left:1294px;top:158px;width:0;height:0;border-left:4px solid transparent;border-right:4px solid transparent;border-top:4px solid #222"></div><svg class="a" style="left:1308.0px;top:147.0px" width="24" height="22" viewBox="0 0 24 22"><path d="M3 16V2h17v14" fill="#fff" stroke="#7a2e12" stroke-width="2"/><path d="M12 8c-2 3-2 5 0 5s2-2 0-5z" fill="#222"/><rect x="0" y="16" width="24" height="5" fill="#2a5d9f"/></svg><div class="a" style="left:1338px;top:158px;width:0;height:0;border-left:4px solid transparent;border-right:4px solid transparent;border-top:4px solid #222"></div><div class="a" style="left:1354px;top:143px;width:1px;height:30px;background:#dcdcdc"></div><svg class="a" style="left:1363.0px;top:149.0px" width="20" height="18" viewBox="0 0 20 18"><rect x="1" y="1" width="18" height="16" rx="2" fill="#fff" stroke="#555" stroke-width="1.2"/><path d="M4 5h12" stroke="#c9211e" stroke-width="1.5"/><path d="M4 9h6" stroke="#2f9a2f" stroke-width="1.5"/><path d="M4 13h9" stroke="#2f9a2f" stroke-width="1.5"/></svg><div class="a" style="left:1391px;top:158px;width:0;height:0;border-left:4px solid transparent;border-right:4px solid transparent;border-top:4px solid #222"></div><div class="a" style="left:1406px;top:143px;width:1px;height:30px;background:#dcdcdc"></div><div class="a" style="left:1409px;top:141px;width:33px;height:34px;border-radius:6px;background:#d3d3d3"></div><svg class="a" style="left:1413.0px;top:146.0px" width="26" height="24" viewBox="0 0 26 24"><text x="5" y="18" font-size="20" font-weight="bold" fill="#333" font-family="Liberation Sans">A</text><path d="M15 20.5h7.5M20.5 18.5l2.2 2-2.2 2" stroke="#e2581f" stroke-width="1.4" fill="none"/></svg><svg class="a" style="left:1447.0px;top:146.0px" width="26" height="24" viewBox="0 0 26 24"><text x="4" y="18" font-size="20" font-weight="bold" fill="#333" font-family="Liberation Sans">A</text><path d="M21 13v9M19 20l2 2.2 2-2.2" stroke="#e2581f" stroke-width="1.4" fill="none"/></svg><div class="a" style="left:4px;top:181px;width:172px;height:32px;border:1px solid #cfcfcf;border-radius:6px;background:#fff"></div><div class="a" style="left:141px;top:182px;width:1px;height:30px;background:#d8d8d8"></div><div class="t" style="left:13px;top:188px;font-size:14px;color:#222;line-height:18px">M47</div><svg class="a" style="left:153px;top:193px" width="11" height="7"><path d="M1 1L5.5 5.5L10 1" stroke="#444" stroke-width="1.2" fill="none"/></svg><div class="a" style="left:181px;top:184px;width:1px;height:26px;background:#d8d8d8"></div><div class="t" style="left:192px;top:187px;font-size:17px;font-weight:bold;color:#222;line-height:20px">f</div><svg class="a" style="left:200px;top:198px" width="5" height="5"><path d="M0.5 0.5l4 4M4.5 0.5l-4 4" stroke="#333" stroke-width="1"/></svg><svg class="a" style="left:215px;top:191px" width="12" height="12"><path d="M0 0h11.5v2.6H4.2l4.3 3.4-4.3 3.4h7.3V12H0V9.6L4.8 6 0 2.4z" fill="#222"/></svg><div class="a" style="left:236px;top:197px;width:0;height:0;border-left:3.5px solid transparent;border-right:3.5px solid transparent;border-top:4px solid #222"></div><div class="a" style="left:253px;top:193px;width:12px;height:2.2px;background:#222"></div><div class="a" style="left:253px;top:198px;width:12px;height:2.2px;background:#222"></div><div class="a" style="left:271px;top:185px;width:1568px;height:25px;border:1px solid #cfcfcf;background:#fff"></div><div class="t" style="left:278px;top:188px;font-size:14px;color:#222;line-height:18px">=IFNA(VLOOKUP(H47,$연체내역.E:I,5,0),0)+IFNA(VLOOKUP(H47,$연체내역.E:I,4,0),0)</div><svg class="a" style="left:1842px;top:194px" width="12" height="7"><path d="M1 1L6 6L11 1" stroke="#444" stroke-width="1.2" fill="none"/></svg><div class="a" style="left:0;top:216px;width:1862px;height:751px;background:#fafafa"></div><div class="a" style="left:36px;top:240px;width:1813px;height:727px;background:#fff;overflow:hidden"><div class="hl" style="left:0;top:18px;width:1813px"></div><div class="hl" style="left:0;top:36px;width:1813px"></div><div class="hl" style="left:0;top:54px;width:1813px"></div><div class="hl" style="left:0;top:72px;width:1813px"></div><div class="hl" style="left:0;top:90px;width:1813px"></div><div class="hl" style="left:0;top:108px;width:1813px"></div><div class="hl" style="left:0;top:126px;width:1813px"></div><div class="hl" style="left:0;top:144px;width:1813px"></div><div class="hl" style="left:0;top:162px;width:1813px"></div><div class="hl" style="left:0;top:180px;width:1813px"></div><div class="hl" style="left:0;top:198px;width:1813px"></div><div class="hl" style="left:0;top:216px;width:1813px"></div><div class="hl" style="left:0;top:234px;width:1813px"></div><div class="hl" style="left:0;top:252px;width:1813px"></div><div class="hl" style="left:0;top:270px;width:1813px"></div><div class="hl" style="left:0;top:288px;width:1813px"></div><div class="hl" style="left:0;top:306px;width:1813px"></div><div class="hl" style="left:0;top:324px;width:1813px"></div><div class="hl" style="left:0;top:342px;width:1813px"></div><div class="hl" style="left:0;top:360px;width:1813px"></div><div class="hl" style="left:0;top:378px;width:1813px"></div><div class="hl" style="left:0;top:396px;width:1813px"></div><div class="hl" style="left:0;top:414px;width:1813px"></div><div class="hl" style="left:0;top:432px;width:1813px"></div><div class="hl" style="left:0;top:450px;width:1813px"></div><div class="hl" style="left:0;top:468px;width:1813px"></div><div class="hl" style="left:0;top:486px;width:1813px"></div><div class="hl" style="left:0;top:504px;width:1813px"></div><div class="hl" style="left:0;top:522px;width:1813px"></div><div class="hl" style="left:0;top:540px;width:1813px"></div><div class="hl" style="left:0;top:558px;width:1813px"></div><div class="hl" style="left:0;top:576px;width:1813px"></div><div class="hl" style="left:0;top:594px;width:1813px"></div><div class="hl" style="left:0;top:612px;width:1813px"></div><div class="hl" style="left:0;top:630px;width:1813px"></div><div class="hl" style="left:0;top:648px;width:1813px"></div><div class="hl" style="left:0;top:666px;width:1813px"></div><div class="hl" style="left:0;top:684px;width:1813px"></div><div class="hl" style="left:0;top:702px;width:1813px"></div><div class="hl" style="left:0;top:720px;width:1813px"></div><div class="hl" style="left:0;top:738px;width:1813px"></div><div class="vl" style="left:62px;top:0px;height:727px"></div><div class="vl" style="left:124px;top:0px;height:727px"></div><div class="vl" style="left:186px;top:0px;height:727px"></div><div class="vl" style="left:248px;top:0px;height:727px"></div><div class="vl" style="left:310px;top:0px;height:727px"></div><div class="vl" style="left:372px;top:0px;height:727px"></div><div class="vl" style="left:434px;top:0px;height:727px"></div><div class="vl" style="left:496px;top:0px;height:727px"></div><div class="vl" style="left:558px;top:0px;height:727px"></div><div class="vl" style="left:620px;top:0px;height:727px"></div><div class="vl" style="left:682px;top:0px;height:727px"></div><div class="vl" style="left:744px;top:0px;height:727px"></div><div class="vl" style="left:806px;top:0px;height:727px"></div><div class="vl" style="left:868px;top:0px;height:727px"></div><div class="vl" style="left:930px;top:0px;height:727px"></div><div class="vl" style="left:992px;top:0px;height:727px"></div><div class="vl" style="left:1054px;top:0px;height:727px"></div><div class="vl" style="left:1116px;top:0px;height:727px"></div><div class="vl" style="left:1178px;top:0px;height:727px"></div><div class="vl" style="left:1240px;top:0px;height:727px"></div><div class="vl" style="left:1302px;top:0px;height:727px"></div><div class="vl" style="left:1364px;top:0px;height:727px"></div><div class="vl" style="left:1426px;top:0px;height:727px"></div><div class="vl" style="left:1488px;top:0px;height:727px"></div><div class="vl" style="left:1550px;top:0px;height:727px"></div><div class="vl" style="left:1612px;top:0px;height:727px"></div><div class="vl" style="left:1674px;top:0px;height:727px"></div><div class="vl" style="left:1736px;top:0px;height:727px"></div><div class="vl" style="left:1798px;top:0px;height:727px"></div><div class="a" style="left:0;top:0;width:930px;height:19px;background:#dce6f2"></div><div class="a" style="left:124px;top:108px;width:63px;height:19px;background:#ffff00"></div><div class="a" style="left:124px;top:180px;width:63px;height:19px;background:#ffff00"></div><div class="a" style="left:124px;top:216px;width:63px;height:19px;background:#ffff00"></div><div class="a" style="left:124px;top:342px;width:63px;height:19px;background:#ffff00"></div><div class="a" style="left:558px;top:162px;width:63px;height:19px;background:#ffff00"></div><div class="a" style="left:558px;top:270px;width:63px;height:19px;background:#ffff00"></div><div class="a" style="left:558px;top:306px;width:63px;height:19px;background:#ffff00"></div><div class="a" style="left:744px;top:396px;width:63px;height:19px;background:#ffff00"></div><div class="a" style="left:744px;top:486px;width:63px;height:19px;background:#ffff00"></div><div class="a" style="left:744px;top:504px;width:63px;height:19px;background:#ffff00"></div><div class="a" style="left:0;top:648px;width:869px;height:19px;background:#ffff00"></div><div class="a" style="left:1px;top:575px;width:929px;height:1px;background:#000"></div><div class="a" style="left:1px;top:576px;width:929px;height:1px;background:#fff"></div><div class="a" style="left:1px;top:577px;width:929px;height:1px;background:#000"></div></div><div class="a" style="left:0;top:0;width:1849px;height:967px;overflow:hidden"><div class="cell" style="left:36px;top:241px;width:62px;text-align:center;color:#111;font-size:11.5px;letter-spacing:-0.4px;-webkit-text-stroke:0.25px #111"><span class="sq">회차</span></div><div class="cell" style="left:98px;top:241px;width:124px;text-align:center;color:#111;font-size:11.5px;letter-spacing:-0.4px;-webkit-text-stroke:0.25px #111"><span class="sq">대상기간</span></div><div class="cell" style="left:222px;top:241px;width:62px;text-align:center;color:#111;font-size:11.5px;letter-spacing:-0.4px;-webkit-text-stroke:0.25px #111"><span class="sq">계산일수</span></div><div class="cell" style="left:284px;top:241px;width:62px;text-align:center;color:#111;font-size:11.5px;letter-spacing:-0.4px;-webkit-text-stroke:0.25px #111"><span>이자</span></div><div class="cell" style="left:346px;top:241px;width:62px;text-align:center;color:#111;font-size:11.5px;letter-spacing:-0.4px;-webkit-text-stroke:0.25px #111"><span>원금</span></div><div class="cell" style="left:408px;top:241px;width:62px;text-align:center;color:#111;font-size:11.5px;letter-spacing:-0.4px;-webkit-text-stroke:0.25px #111"><span class="sq">상환예정액</span></div><div class="cell" style="left:470px;top:241px;width:62px;text-align:center;color:#111;font-size:11.5px;letter-spacing:-0.4px;-webkit-text-stroke:0.25px #111"><span class="sq">상환일자</span></div><div class="cell" style="left:532px;top:241px;width:62px;text-align:center;color:#111;font-size:11.5px;letter-spacing:-0.4px;-webkit-text-stroke:0.25px #111"><span class="sq">상환원금</span></div><div class="cell" style="left:594px;top:241px;width:62px;text-align:center;color:#111;font-size:11.5px;letter-spacing:-0.4px;-webkit-text-stroke:0.25px #111"><span>상환이자</span></div><div class="cell" style="left:656px;top:241px;width:62px;text-align:center;color:#111;font-size:11.5px;letter-spacing:-0.4px;-webkit-text-stroke:0.25px #111"><span class="sq">상환금액</span></div><div class="cell" style="left:718px;top:241px;width:62px;text-align:center;color:#111;font-size:11.5px;letter-spacing:-0.4px;-webkit-text-stroke:0.25px #111"><span class="sq">대출잔액</span></div><div class="cell" style="left:780px;top:241px;width:62px;text-align:center;color:#111;font-size:11.5px;letter-spacing:-0.4px;-webkit-text-stroke:0.25px #111"><span>연체이자</span></div><div class="cell" style="left:842px;top:241px;width:62px;text-align:center;color:#111;font-size:11.5px;letter-spacing:-0.4px;-webkit-text-stroke:0.25px #111"><span class="sq">연체시작일</span></div><div class="cell" style="left:904px;top:241px;width:62px;text-align:center;color:#111;font-size:11.5px;letter-spacing:-0.4px;-webkit-text-stroke:0.25px #111"><span>비고</span></div><div class="cell" style="left:36px;top:260px;width:62px;text-align:center;color:#000">1</div><div class="cell" style="left:99px;top:260px;width:62px;text-align:center;color:#000">###</div><div class="tri tl" style="left:99px;top:265px"></div><div class="tri tr" style="left:156.5px;top:265px"></div><div class="cell" style="left:161px;top:260px;width:62px;text-align:center;color:#000">###</div><div class="tri tl" style="left:161px;top:265px"></div><div class="tri tr" style="left:218.5px;top:265px"></div><div class="cell" style="left:222px;top:260px;width:62px;text-align:center;color:#000">20</div><div class="cell" style="left:284px;top:260px;width:58px;text-align:right;color:#000">128,767.0</div><div class="cell" style="left:408px;top:260px;width:58px;text-align:right;color:#000">128,767.0</div><div class="cell" style="left:471px;top:260px;width:62px;text-align:center;color:#000">###</div><div class="tri tl" style="left:471px;top:265px"></div><div class="tri tr" style="left:528.5px;top:265px"></div><div class="cell" style="left:594px;top:260px;width:58px;text-align:right;color:#000">-128,767.0</div><div class="cell" style="left:656px;top:260px;width:60px;text-align:right;color:#000">128,767</div><div class="cell" style="left:719px;top:260px;width:62px;text-align:center;color:#000">###</div><div class="tri tl" style="left:719px;top:265px"></div><div class="tri tr" style="left:776.5px;top:265px"></div><div class="cell" style="left:844px;top:260px">-</div><div class="cell" style="left:36px;top:278px;width:62px;text-align:center;color:#000">2</div><div class="cell" style="left:99px;top:278px;width:62px;text-align:center;color:#000">###</div><div class="tri tl" style="left:99px;top:283px"></div><div class="tri tr" style="left:156.5px;top:283px"></div><div class="cell" style="left:161px;top:278px;width:62px;text-align:center;color:#000">###</div><div class="tri tl" style="left:161px;top:283px"></div><div class="tri tr" style="left:218.5px;top:283px"></div><div class="cell" style="left:222px;top:278px;width:62px;text-align:center;color:#000">30</div><div class="cell" style="left:284px;top:278px;width:58px;text-align:right;color:#000">193,151.0</div><div class="cell" style="left:408px;top:278px;width:58px;text-align:right;color:#000">193,151.0</div><div class="cell" style="left:471px;top:278px;width:62px;text-align:center;color:#000">###</div><div class="tri tl" style="left:471px;top:283px"></div><div class="tri tr" style="left:528.5px;top:283px"></div><div class="cell" style="left:594px;top:278px;width:58px;text-align:right;color:#000">-193,151.0</div><div class="cell" style="left:656px;top:278px;width:60px;text-align:right;color:#000">193,151</div><div class="cell" style="left:719px;top:278px;width:62px;text-align:center;color:#000">###</div><div class="tri tl" style="left:719px;top:283px"></div><div class="tri tr" style="left:776.5px;top:283px"></div><div class="cell" style="left:844px;top:278px">-</div><div class="cell" style="left:36px;top:296px;width:62px;text-align:center;color:#000">3</div><div class="cell" style="left:99px;top:296px;width:62px;text-align:center;color:#000">###</div><div class="tri tl" style="left:99px;top:301px"></div><div class="tri tr" style="left:156.5px;top:301px"></div><div class="cell" style="left:161px;top:296px;width:62px;text-align:center;color:#000">###</div><div class="tri tl" style="left:161px;top:301px"></div><div class="tri tr" style="left:218.5px;top:301px"></div><div class="cell" style="left:222px;top:296px;width:62px;text-align:center;color:#000">32</div><div class="cell" style="left:284px;top:296px;width:58px;text-align:right;color:#000">206,027.0</div><div class="cell" style="left:408px;top:296px;width:58px;text-align:right;color:#000">206,027.0</div><div class="cell" style="left:471px;top:296px;width:62px;text-align:center;color:#000">###</div><div class="tri tl" style="left:471px;top:301px"></div><div class="tri tr" style="left:528.5px;top:301px"></div><div class="cell" style="left:594px;top:296px;width:58px;text-align:right;color:#000">-206,027.0</div><div class="cell" style="left:656px;top:296px;width:60px;text-align:right;color:#000">206,027</div><div class="cell" style="left:719px;top:296px;width:62px;text-align:center;color:#000">###</div><div class="tri tl" style="left:719px;top:301px"></div><div class="tri tr" style="left:776.5px;top:301px"></div><div class="cell" style="left:844px;top:296px">-</div><div class="cell" style="left:36px;top:314px;width:62px;text-align:center;color:#000">4</div><div class="cell" style="left:99px;top:314px;width:62px;text-align:center;color:#000">###</div><div class="tri tl" style="left:99px;top:319px"></div><div class="tri tr" style="left:156.5px;top:319px"></div><div class="cell" style="left:161px;top:314px;width:62px;text-align:center;color:#000">###</div><div class="tri tl" style="left:161px;top:319px"></div><div class="tri tr" style="left:218.5px;top:319px"></div><div class="cell" style="left:222px;top:314px;width:62px;text-align:center;color:#000">29</div><div class="cell" style="left:284px;top:314px;width:58px;text-align:right;color:#000">186,712.0</div><div class="cell" style="left:408px;top:314px;width:58px;text-align:right;color:#000">186,712.0</div><div class="cell" style="left:471px;top:314px;width:62px;text-align:center;color:#000">###</div><div class="tri tl" style="left:471px;top:319px"></div><div class="tri tr" style="left:528.5px;top:319px"></div><div class="cell" style="left:594px;top:314px;width:58px;text-align:right;color:#000">-186,712.0</div><div class="cell" style="left:656px;top:314px;width:60px;text-align:right;color:#000">186,712</div><div class="cell" style="left:719px;top:314px;width:62px;text-align:center;color:#000">###</div><div class="tri tl" style="left:719px;top:319px"></div><div class="tri tr" style="left:776.5px;top:319px"></div><div class="cell" style="left:780px;top:314px;width:61px;text-align:right;color:#000">126</div><div class="cell" style="left:843px;top:314px;width:62px;text-align:center;color:#000">###</div><div class="tri tl" style="left:843px;top:319px"></div><div class="tri tr" style="left:900.5px;top:319px"></div><div class="cell" style="left:36px;top:332px;width:62px;text-align:center;color:#000">5</div><div class="cell" style="left:99px;top:332px;width:62px;text-align:center;color:#000">###</div><div class="tri tl" style="left:99px;top:337px"></div><div class="tri tr" style="left:156.5px;top:337px"></div><div class="cell" style="left:161px;top:332px;width:62px;text-align:center;color:#000">###</div><div class="tri tl" style="left:161px;top:337px"></div><div class="tri tr" style="left:218.5px;top:337px"></div><div class="cell" style="left:222px;top:332px;width:62px;text-align:center;color:#000">31</div><div class="cell" style="left:284px;top:332px;width:58px;text-align:right;color:#000">199,589.0</div><div class="cell" style="left:408px;top:332px;width:58px;text-align:right;color:#000">199,589.0</div><div class="cell" style="left:471px;top:332px;width:62px;text-align:center;color:#000">###</div><div class="tri tl" style="left:471px;top:337px"></div><div class="tri tr" style="left:528.5px;top:337px"></div><div class="cell" style="left:594px;top:332px;width:58px;text-align:right;color:#000">-199,589.0</div><div class="cell" style="left:656px;top:332px;width:60px;text-align:right;color:#000">199,589</div><div class="cell" style="left:719px;top:332px;width:62px;text-align:center;color:#000">###</div><div class="tri tl" style="left:719px;top:337px"></div><div class="tri tr" style="left:776.5px;top:337px"></div><div class="cell" style="left:844px;top:332px">-</div><div class="cell" style="left:36px;top:350px;width:62px;text-align:center;color:#000">6</div><div class="cell" style="left:99px;top:350px;width:62px;text-align:center;color:#000">###</div><div class="tri tl" style="left:99px;top:355px"></div><div class="tri tr" style="left:156.5px;top:355px"></div><div class="cell" style="left:161px;top:350px;width:62px;text-align:center;color:#000">###</div><div class="tri tl" style="left:161px;top:355px"></div><div class="tri tr" style="left:218.5px;top:355px"></div><div class="cell" style="left:222px;top:350px;width:62px;text-align:center;color:#000">33</div><div class="cell" style="left:284px;top:350px;width:58px;text-align:right;color:#000">212,466.0</div><div class="cell" style="left:408px;top:350px;width:58px;text-align:right;color:#000">212,466.0</div><div class="cell" style="left:471px;top:350px;width:62px;text-align:center;color:#000">###</div><div class="tri tl" style="left:471px;top:355px"></div><div class="tri tr" style="left:528.5px;top:355px"></div><div class="cell" style="left:594px;top:350px;width:58px;text-align:right;color:#000">-212,465.0</div><div class="cell" style="left:656px;top:350px;width:60px;text-align:right;color:#000">212,465</div><div class="cell" style="left:719px;top:350px;width:62px;text-align:center;color:#000">###</div><div class="tri tl" style="left:719px;top:355px"></div><div class="tri tr" style="left:776.5px;top:355px"></div><div class="cell" style="left:844px;top:350px">-</div><div class="cell" style="left:36px;top:368px;width:62px;text-align:center;color:#000">7</div><div class="cell" style="left:99px;top:368px;width:62px;text-align:center;color:#000">###</div><div class="tri tl" style="left:99px;top:373px"></div><div class="tri tr" style="left:156.5px;top:373px"></div><div class="cell" style="left:161px;top:368px;width:62px;text-align:center;color:#000">###</div><div class="tri tl" style="left:161px;top:373px"></div><div class="tri tr" style="left:218.5px;top:373px"></div><div class="cell" style="left:222px;top:368px;width:62px;text-align:center;color:#000">28</div><div class="cell" style="left:284px;top:368px;width:58px;text-align:right;color:#000">180,274.0</div><div class="cell" style="left:408px;top:368px;width:58px;text-align:right;color:#000">180,274.0</div><div class="cell" style="left:471px;top:368px;width:62px;text-align:center;color:#000">###</div><div class="tri tl" style="left:471px;top:373px"></div><div class="tri tr" style="left:528.5px;top:373px"></div><div class="cell" style="left:594px;top:368px;width:58px;text-align:right;color:#000">-180,274.0</div><div class="cell" style="left:656px;top:368px;width:60px;text-align:right;color:#000">180,274</div><div class="cell" style="left:719px;top:368px;width:62px;text-align:center;color:#000">###</div><div class="tri tl" style="left:719px;top:373px"></div><div class="tri tr" style="left:776.5px;top:373px"></div><div class="cell" style="left:844px;top:368px">-</div><div class="cell" style="left:36px;top:386px;width:62px;text-align:center;color:#000">8</div><div class="cell" style="left:99px;top:386px;width:62px;text-align:center;color:#000">###</div><div class="tri tl" style="left:99px;top:391px"></div><div class="tri tr" style="left:156.5px;top:391px"></div><div class="cell" style="left:161px;top:386px;width:62px;text-align:center;color:#000">###</div><div class="tri tl" style="left:161px;top:391px"></div><div class="tri tr" style="left:218.5px;top:391px"></div><div class="cell" style="left:222px;top:386px;width:62px;text-align:center;color:#000">30</div><div class="cell" style="left:284px;top:386px;width:58px;text-align:right;color:#000">193,151.0</div><div class="cell" style="left:408px;top:386px;width:58px;text-align:right;color:#000">193,151.0</div><div class="cell" style="left:471px;top:386px;width:62px;text-align:center;color:#000">###</div><div class="tri tl" style="left:471px;top:391px"></div><div class="tri tr" style="left:528.5px;top:391px"></div><div class="cell" style="left:99px;top:404px;width:62px;text-align:center;color:#000">###</div><div class="tri tl" style="left:99px;top:409px"></div><div class="tri tr" style="left:156.5px;top:409px"></div><div class="cell" style="left:161px;top:404px;width:62px;text-align:center;color:#000">###</div><div class="tri tl" style="left:161px;top:409px"></div><div class="tri tr" style="left:218.5px;top:409px"></div><div class="cell" style="left:222px;top:404px;width:62px;text-align:center;color:#000">4</div><div class="cell" style="left:284px;top:404px;width:58px;text-align:right;color:#000">25,753.0</div><div class="cell" style="left:408px;top:404px;width:58px;text-align:right;color:#000">25,753.0</div><div class="cell" style="left:471px;top:404px;width:62px;text-align:center;color:#000">###</div><div class="tri tl" style="left:471px;top:409px"></div><div class="tri tr" style="left:528.5px;top:409px"></div><div class="cell" style="left:594px;top:404px;width:58px;text-align:right;color:#000">-218,904.0</div><div class="cell" style="left:656px;top:404px;width:60px;text-align:right;color:#000">219,166</div><div class="cell" style="left:719px;top:404px;width:62px;text-align:center;color:#000">###</div><div class="tri tl" style="left:719px;top:409px"></div><div class="tri tr" style="left:776.5px;top:409px"></div><div class="cell" style="left:780px;top:404px;width:61px;text-align:right;color:#000">262</div><div class="cell" style="left:843px;top:404px;width:62px;text-align:center;color:#000">###</div><div class="tri tl" style="left:843px;top:409px"></div><div class="tri tr" style="left:900.5px;top:409px"></div><div class="cell" style="left:36px;top:422px;width:62px;text-align:center;color:#000">9</div><div class="cell" style="left:99px;top:422px;width:62px;text-align:center;color:#000">###</div><div class="tri tl" style="left:99px;top:427px"></div><div class="tri tr" style="left:156.5px;top:427px"></div><div class="cell" style="left:161px;top:422px;width:62px;text-align:center;color:#000">###</div><div class="tri tl" style="left:161px;top:427px"></div><div class="tri tr" style="left:218.5px;top:427px"></div><div class="cell" style="left:222px;top:422px;width:62px;text-align:center;color:#000">28</div><div class="cell" style="left:284px;top:422px;width:58px;text-align:right;color:#000">180,274.0</div><div class="cell" style="left:408px;top:422px;width:58px;text-align:right;color:#000">180,274.0</div><div class="cell" style="left:471px;top:422px;width:62px;text-align:center;color:#000">###</div><div class="tri tl" style="left:471px;top:427px"></div><div class="tri tr" style="left:528.5px;top:427px"></div><div class="cell" style="left:594px;top:422px;width:58px;text-align:right;color:#000">-180,256.0</div><div class="cell" style="left:656px;top:422px;width:60px;text-align:right;color:#000">180,256</div><div class="cell" style="left:719px;top:422px;width:62px;text-align:center;color:#000">###</div><div class="tri tl" style="left:719px;top:427px"></div><div class="tri tr" style="left:776.5px;top:427px"></div><div class="cell" style="left:844px;top:422px">-</div><div class="cell" style="left:36px;top:440px;width:62px;text-align:center;color:#000">10</div><div class="cell" style="left:99px;top:440px;width:62px;text-align:center;color:#000">###</div><div class="tri tl" style="left:99px;top:445px"></div><div class="tri tr" style="left:156.5px;top:445px"></div><div class="cell" style="left:161px;top:440px;width:62px;text-align:center;color:#000">###</div><div class="tri tl" style="left:161px;top:445px"></div><div class="tri tr" style="left:218.5px;top:445px"></div><div class="cell" style="left:222px;top:440px;width:62px;text-align:center;color:#000">30</div><div class="cell" style="left:284px;top:440px;width:58px;text-align:right;color:#000">193,151.0</div><div class="cell" style="left:408px;top:440px;width:58px;text-align:right;color:#000">193,151.0</div><div class="cell" style="left:471px;top:440px;width:62px;text-align:center;color:#000">###</div><div class="tri tl" style="left:471px;top:445px"></div><div class="tri tr" style="left:528.5px;top:445px"></div><div class="cell" style="left:594px;top:440px;width:58px;text-align:right;color:#000">-193,151.0</div><div class="cell" style="left:656px;top:440px;width:60px;text-align:right;color:#000">193,951</div><div class="cell" style="left:719px;top:440px;width:62px;text-align:center;color:#000">###</div><div class="tri tl" style="left:719px;top:445px"></div><div class="tri tr" style="left:776.5px;top:445px"></div><div class="cell" style="left:780px;top:440px;width:61px;text-align:right;color:#000">800</div><div class="cell" style="left:843px;top:440px;width:62px;text-align:center;color:#000">###</div><div class="tri tl" style="left:843px;top:445px"></div><div class="tri tr" style="left:900.5px;top:445px"></div><div class="cell" style="left:36px;top:458px;width:62px;text-align:center;color:#000">11</div><div class="cell" style="left:99px;top:458px;width:62px;text-align:center;color:#000">###</div><div class="tri tl" style="left:99px;top:463px"></div><div class="tri tr" style="left:156.5px;top:463px"></div><div class="cell" style="left:161px;top:458px;width:62px;text-align:center;color:#000">###</div><div class="tri tl" style="left:161px;top:463px"></div><div class="tri tr" style="left:218.5px;top:463px"></div><div class="cell" style="left:222px;top:458px;width:62px;text-align:center;color:#000">32</div><div class="cell" style="left:284px;top:458px;width:58px;text-align:right;color:#000">206,027.0</div><div class="cell" style="left:408px;top:458px;width:58px;text-align:right;color:#000">206,027.0</div><div class="cell" style="left:471px;top:458px;width:62px;text-align:center;color:#000">###</div><div class="tri tl" style="left:471px;top:463px"></div><div class="tri tr" style="left:528.5px;top:463px"></div><div class="cell" style="left:594px;top:458px;width:58px;text-align:right;color:#000">-206,027.0</div><div class="cell" style="left:656px;top:458px;width:60px;text-align:right;color:#000">206,446</div><div class="cell" style="left:719px;top:458px;width:62px;text-align:center;color:#000">###</div><div class="tri tl" style="left:719px;top:463px"></div><div class="tri tr" style="left:776.5px;top:463px"></div><div class="cell" style="left:780px;top:458px;width:61px;text-align:right;color:#000">419</div><div class="cell" style="left:843px;top:458px;width:62px;text-align:center;color:#000">###</div><div class="tri tl" style="left:843px;top:463px"></div><div class="tri tr" style="left:900.5px;top:463px"></div><div class="cell" style="left:36px;top:476px;width:62px;text-align:center;color:#000">12</div><div class="cell" style="left:99px;top:476px;width:62px;text-align:center;color:#000">###</div><div class="tri tl" style="left:99px;top:481px"></div><div class="tri tr" style="left:156.5px;top:481px"></div><div class="cell" style="left:161px;top:476px;width:62px;text-align:center;color:#000">###</div><div class="tri tl" style="left:161px;top:481px"></div><div class="tri tr" style="left:218.5px;top:481px"></div><div class="cell" style="left:222px;top:476px;width:62px;text-align:center;color:#000">28</div><div class="cell" style="left:284px;top:476px;width:58px;text-align:right;color:#000">180,274.0</div><div class="cell" style="left:408px;top:476px;width:58px;text-align:right;color:#000">180,274.0</div><div class="cell" style="left:471px;top:476px;width:62px;text-align:center;color:#000">###</div><div class="tri tl" style="left:471px;top:481px"></div><div class="tri tr" style="left:528.5px;top:481px"></div><div class="cell" style="left:594px;top:476px;width:58px;text-align:right;color:#000">-180,274.0</div><div class="cell" style="left:656px;top:476px;width:60px;text-align:right;color:#000">180,274</div><div class="cell" style="left:719px;top:476px;width:62px;text-align:center;color:#000">###</div><div class="tri tl" style="left:719px;top:481px"></div><div class="tri tr" style="left:776.5px;top:481px"></div><div class="cell" style="left:844px;top:476px">-</div><div class="cell" style="left:36px;top:494px;width:62px;text-align:center;color:#000">13</div><div class="cell" style="left:99px;top:494px;width:62px;text-align:center;color:#000">###</div><div class="tri tl" style="left:99px;top:499px"></div><div class="tri tr" style="left:156.5px;top:499px"></div><div class="cell" style="left:161px;top:494px;width:62px;text-align:center;color:#000">###</div><div class="tri tl" style="left:161px;top:499px"></div><div class="tri tr" style="left:218.5px;top:499px"></div><div class="cell" style="left:222px;top:494px;width:62px;text-align:center;color:#000">11</div><div class="cell" style="left:284px;top:494px;width:58px;text-align:right;color:#000">70,822.0</div><div class="cell" style="left:408px;top:494px;width:58px;text-align:right;color:#000">70,822.0</div><div class="cell" style="left:844px;top:494px">-</div><div class="cell" style="left:99px;top:512px;width:62px;text-align:center;color:#000">###</div><div class="tri tl" style="left:99px;top:517px"></div><div class="tri tr" style="left:156.5px;top:517px"></div><div class="cell" style="left:161px;top:512px;width:62px;text-align:center;color:#000">###</div><div class="tri tl" style="left:161px;top:517px"></div><div class="tri tr" style="left:218.5px;top:517px"></div><div class="cell" style="left:222px;top:512px;width:62px;text-align:center;color:#000">3</div><div class="cell" style="left:284px;top:512px;width:58px;text-align:right;color:#000">19,315.0</div><div class="cell" style="left:408px;top:512px;width:58px;text-align:right;color:#000">19,315.0</div><div class="cell" style="left:471px;top:512px;width:62px;text-align:center;color:#000">###</div><div class="tri tl" style="left:471px;top:517px"></div><div class="tri tr" style="left:528.5px;top:517px"></div><div class="cell" style="left:532px;top:512px;width:60px;text-align:right;color:#000">884,336</div><div class="cell" style="left:594px;top:512px;width:58px;text-align:right;color:#000">90,137.0</div><div class="cell" style="left:656px;top:512px;width:58px;text-align:right;color:#000">1,000,000</div><div class="cell" style="left:719px;top:512px;width:62px;text-align:center;color:#000">###</div><div class="tri tl" style="left:719px;top:517px"></div><div class="tri tr" style="left:776.5px;top:517px"></div><div class="cell" style="left:780px;top:512px;width:61px;text-align:right;color:#000">25,527</div><div class="cell" style="left:843px;top:512px;width:62px;text-align:center;color:#000">###</div><div class="tri tl" style="left:843px;top:517px"></div><div class="tri tr" style="left:900.5px;top:517px"></div><div class="cell" style="left:99px;top:530px;width:62px;text-align:center;color:#000">###</div><div class="tri tl" style="left:99px;top:535px"></div><div class="tri tr" style="left:156.5px;top:535px"></div><div class="cell" style="left:161px;top:530px;width:62px;text-align:center;color:#000">###</div><div class="tri tl" style="left:161px;top:535px"></div><div class="tri tr" style="left:218.5px;top:535px"></div><div class="cell" style="left:222px;top:530px;width:62px;text-align:center;color:#000">3</div><div class="cell" style="left:284px;top:530px;width:58px;text-align:right;color:#000">18,632.0</div><div class="cell" style="left:408px;top:530px;width:58px;text-align:right;color:#000">18,632.0</div><div class="cell" style="left:471px;top:530px;width:62px;text-align:center;color:#000">###</div><div class="tri tl" style="left:471px;top:535px"></div><div class="tri tr" style="left:528.5px;top:535px"></div><div class="cell" style="left:596px;top:530px">-</div><div class="cell" style="left:780px;top:530px;width:61px;text-align:right;color:#000">24,597</div><div class="cell" style="left:843px;top:530px;width:62px;text-align:center;color:#000">###</div><div class="tri tl" style="left:843px;top:535px"></div><div class="tri tr" style="left:900.5px;top:535px"></div><div class="cell" style="left:99px;top:548px;width:62px;text-align:center;color:#000">###</div><div class="tri tl" style="left:99px;top:553px"></div><div class="tri tr" style="left:156.5px;top:553px"></div><div class="cell" style="left:161px;top:548px;width:62px;text-align:center;color:#000">###</div><div class="tri tl" style="left:161px;top:553px"></div><div class="tri tr" style="left:218.5px;top:553px"></div><div class="cell" style="left:222px;top:548px;width:62px;text-align:center;color:#000">5</div><div class="cell" style="left:284px;top:548px;width:58px;text-align:right;color:#000">31,053.0</div><div class="cell" style="left:408px;top:548px;width:58px;text-align:right;color:#000">31,053.0</div><div class="cell" style="left:471px;top:548px;width:62px;text-align:center;color:#000">###</div><div class="tri tl" style="left:471px;top:553px"></div><div class="tri tr" style="left:528.5px;top:553px"></div><div class="cell" style="left:532px;top:548px;width:60px;text-align:right;color:#000">525,718</div><div class="cell" style="left:594px;top:548px;width:58px;text-align:right;color:#000">49,685.0</div><div class="cell" style="left:656px;top:548px;width:58px;text-align:right;color:#000">600,000</div><div class="cell" style="left:719px;top:548px;width:62px;text-align:center;color:#000">###</div><div class="tri tl" style="left:719px;top:553px"></div><div class="tri tr" style="left:776.5px;top:553px"></div><div class="cell" style="left:36px;top:566px;width:62px;text-align:center;color:#000">14</div><div class="cell" style="left:99px;top:566px;width:62px;text-align:center;color:#000">###</div><div class="tri tl" style="left:99px;top:571px"></div><div class="tri tr" style="left:156.5px;top:571px"></div><div class="cell" style="left:161px;top:566px;width:62px;text-align:center;color:#000">###</div><div class="tri tl" style="left:161px;top:571px"></div><div class="tri tr" style="left:218.5px;top:571px"></div><div class="cell" style="left:222px;top:566px;width:62px;text-align:center;color:#000">3</div><div class="cell" style="left:284px;top:566px;width:58px;text-align:right;color:#000">18,226.0</div><div class="cell" style="left:408px;top:566px;width:58px;text-align:right;color:#000">18,226.0</div><div class="cell" style="left:471px;top:566px;width:62px;text-align:center;color:#000">###</div><div class="tri tl" style="left:471px;top:571px"></div><div class="tri tr" style="left:528.5px;top:571px"></div><div class="cell" style="left:532px;top:566px;width:60px;text-align:right;color:#000">381,774</div><div class="cell" style="left:594px;top:566px;width:58px;text-align:right;color:#000">18,226.0</div><div class="cell" style="left:656px;top:566px;width:58px;text-align:right;color:#000">400,000</div><div class="cell" style="left:719px;top:566px;width:62px;text-align:center;color:#000">###</div><div class="tri tl" style="left:719px;top:571px"></div><div class="tri tr" style="left:776.5px;top:571px"></div><div class="cell" style="left:36px;top:584px;width:62px;text-align:center;color:#000">15</div><div class="cell" style="left:99px;top:584px;width:62px;text-align:center;color:#000">###</div><div class="tri tl" style="left:99px;top:589px"></div><div class="tri tr" style="left:156.5px;top:589px"></div><div class="cell" style="left:161px;top:584px;width:62px;text-align:center;color:#000">###</div><div class="tri tl" style="left:161px;top:589px"></div><div class="tri tr" style="left:218.5px;top:589px"></div><div class="cell" style="left:222px;top:584px;width:62px;text-align:center;color:#000">6</div><div class="cell" style="left:284px;top:584px;width:58px;text-align:right;color:#000">35,861.0</div><div class="cell" style="left:346px;top:584px;width:58px;text-align:right;color:#000">1,004,819</div><div class="cell" style="left:409px;top:584px;width:62px;text-align:center;color:#000">###</div><div class="tri tl" style="left:409px;top:589px"></div><div class="tri tr" style="left:466.5px;top:589px"></div><div class="cell" style="left:471px;top:584px;width:62px;text-align:center;color:#000">###</div><div class="tri tl" style="left:471px;top:589px"></div><div class="tri tr" style="left:528.5px;top:589px"></div><div class="cell" style="left:532px;top:584px;width:60px;text-align:right;color:#000">1,004,819</div><div class="cell" style="left:594px;top:584px;width:58px;text-align:right;color:#000">35,861.0</div><div class="cell" style="left:656px;top:584px;width:58px;text-align:right;color:#000">1,040,680</div><div class="cell" style="left:719px;top:584px;width:62px;text-align:center;color:#000">###</div><div class="tri tl" style="left:719px;top:589px"></div><div class="tri tr" style="left:776.5px;top:589px"></div><div class="cell" style="left:36px;top:602px;width:62px;text-align:center;color:#000">16</div><div class="cell" style="left:99px;top:602px;width:62px;text-align:center;color:#000">###</div><div class="tri tl" style="left:99px;top:607px"></div><div class="tri tr" style="left:156.5px;top:607px"></div><div class="cell" style="left:161px;top:602px;width:62px;text-align:center;color:#000">###</div><div class="tri tl" style="left:161px;top:607px"></div><div class="tri tr" style="left:218.5px;top:607px"></div><div class="cell" style="left:222px;top:602px;width:62px;text-align:center;color:#000">32</div><div class="cell" style="left:284px;top:602px;width:58px;text-align:right;color:#000">182,980.0</div><div class="cell" style="left:346px;top:602px;width:58px;text-align:right;color:#000">1,004,819</div><div class="cell" style="left:409px;top:602px;width:62px;text-align:center;color:#000">###</div><div class="tri tl" style="left:409px;top:607px"></div><div class="tri tr" style="left:466.5px;top:607px"></div><div class="cell" style="left:471px;top:602px;width:62px;text-align:center;color:#000">###</div><div class="tri tl" style="left:471px;top:607px"></div><div class="tri tr" style="left:528.5px;top:607px"></div><div class="cell" style="left:532px;top:602px;width:60px;text-align:right;color:#000">1,013,581</div><div class="cell" style="left:594px;top:602px;width:58px;text-align:right;color:#000">182,980.0</div><div class="cell" style="left:656px;top:602px;width:58px;text-align:right;color:#000">1,196,964</div><div class="cell" style="left:719px;top:602px;width:62px;text-align:center;color:#000">###</div><div class="tri tl" style="left:719px;top:607px"></div><div class="tri tr" style="left:776.5px;top:607px"></div><div class="cell" style="left:780px;top:602px;width:61px;text-align:right;color:#000">403</div><div class="cell" style="left:843px;top:602px;width:62px;text-align:center;color:#000">###</div><div class="tri tl" style="left:843px;top:607px"></div><div class="tri tr" style="left:900.5px;top:607px"></div><div class="cell" style="left:36px;top:620px;width:62px;text-align:center;color:#000">17</div><div class="cell" style="left:99px;top:620px;width:62px;text-align:center;color:#000">###</div><div class="tri tl" style="left:99px;top:625px"></div><div class="tri tr" style="left:156.5px;top:625px"></div><div class="cell" style="left:161px;top:620px;width:62px;text-align:center;color:#000">###</div><div class="tri tl" style="left:161px;top:625px"></div><div class="tri tr" style="left:218.5px;top:625px"></div><div class="cell" style="left:222px;top:620px;width:62px;text-align:center;color:#000">28</div><div class="cell" style="left:284px;top:620px;width:58px;text-align:right;color:#000">152,799.0</div><div class="cell" style="left:346px;top:620px;width:58px;text-align:right;color:#000">1,004,819</div><div class="cell" style="left:409px;top:620px;width:62px;text-align:center;color:#000">###</div><div class="tri tl" style="left:409px;top:625px"></div><div class="tri tr" style="left:466.5px;top:625px"></div><div class="cell" style="left:471px;top:620px;width:62px;text-align:center;color:#000">###</div><div class="tri tl" style="left:471px;top:625px"></div><div class="tri tr" style="left:528.5px;top:625px"></div><div class="cell" style="left:532px;top:620px;width:60px;text-align:right;color:#000">1,004,819</div><div class="cell" style="left:594px;top:620px;width:58px;text-align:right;color:#000">152,799.0</div><div class="cell" style="left:656px;top:620px;width:58px;text-align:right;color:#000">1,158,010</div><div class="cell" style="left:719px;top:620px;width:62px;text-align:center;color:#000">###</div><div class="tri tl" style="left:719px;top:625px"></div><div class="tri tr" style="left:776.5px;top:625px"></div><div class="cell" style="left:780px;top:620px;width:61px;text-align:right;color:#000">392</div><div class="cell" style="left:843px;top:620px;width:62px;text-align:center;color:#000">###</div><div class="tri tl" style="left:843px;top:625px"></div><div class="tri tr" style="left:900.5px;top:625px"></div><div class="cell" style="left:36px;top:638px;width:62px;text-align:center;color:#000">18</div><div class="cell" style="left:99px;top:638px;width:62px;text-align:center;color:#000">###</div><div class="tri tl" style="left:99px;top:643px"></div><div class="tri tr" style="left:156.5px;top:643px"></div><div class="cell" style="left:161px;top:638px;width:62px;text-align:center;color:#000">###</div><div class="tri tl" style="left:161px;top:643px"></div><div class="tri tr" style="left:218.5px;top:643px"></div><div class="cell" style="left:222px;top:638px;width:62px;text-align:center;color:#000">31</div><div class="cell" style="left:284px;top:638px;width:58px;text-align:right;color:#000">161,148.0</div><div class="cell" style="left:346px;top:638px;width:58px;text-align:right;color:#000">1,004,819</div><div class="cell" style="left:409px;top:638px;width:62px;text-align:center;color:#000">###</div><div class="tri tl" style="left:409px;top:643px"></div><div class="tri tr" style="left:466.5px;top:643px"></div><div class="cell" style="left:471px;top:638px;width:62px;text-align:center;color:#000">###</div><div class="tri tl" style="left:471px;top:643px"></div><div class="tri tr" style="left:528.5px;top:643px"></div><div class="cell" style="left:532px;top:638px;width:60px;text-align:right;color:#000">1,003,634</div><div class="cell" style="left:594px;top:638px;width:58px;text-align:right;color:#000">161,148.0</div><div class="cell" style="left:656px;top:638px;width:58px;text-align:right;color:#000">1,166,362</div><div class="cell" style="left:719px;top:638px;width:62px;text-align:center;color:#000">###</div><div class="tri tl" style="left:719px;top:643px"></div><div class="tri tr" style="left:776.5px;top:643px"></div><div class="cell" style="left:780px;top:638px;width:61px;text-align:right;color:#000">1,580</div><div class="cell" style="left:843px;top:638px;width:62px;text-align:center;color:#000">###</div><div class="tri tl" style="left:843px;top:643px"></div><div class="tri tr" style="left:900.5px;top:643px"></div><div class="cell" style="left:471px;top:656px;width:62px;text-align:center;color:#000">###</div><div class="tri tl" style="left:471px;top:661px"></div><div class="tri tr" style="left:528.5px;top:661px"></div><div class="cell" style="left:532px;top:656px;width:60px;text-align:right;color:#000">1,185</div><div class="cell" style="left:719px;top:656px;width:62px;text-align:center;color:#000">###</div><div class="tri tl" style="left:719px;top:661px"></div><div class="tri tr" style="left:776.5px;top:661px"></div><div class="cell" style="left:36px;top:674px;width:62px;text-align:center;color:#000">19</div><div class="cell" style="left:99px;top:674px;width:62px;text-align:center;color:#000">###</div><div class="tri tl" style="left:99px;top:679px"></div><div class="tri tr" style="left:156.5px;top:679px"></div><div class="cell" style="left:161px;top:674px;width:62px;text-align:center;color:#000">###</div><div class="tri tl" style="left:161px;top:679px"></div><div class="tri tr" style="left:218.5px;top:679px"></div><div class="cell" style="left:222px;top:674px;width:62px;text-align:center;color:#000">32</div><div class="cell" style="left:284px;top:674px;width:58px;text-align:right;color:#000">158,065.0</div><div class="cell" style="left:346px;top:674px;width:58px;text-align:right;color:#000">1,004,819</div><div class="cell" style="left:409px;top:674px;width:62px;text-align:center;color:#000">###</div><div class="tri tl" style="left:409px;top:679px"></div><div class="tri tr" style="left:466.5px;top:679px"></div><div class="cell" style="left:471px;top:674px;width:62px;text-align:center;color:#000">###</div><div class="tri tl" style="left:471px;top:679px"></div><div class="tri tr" style="left:528.5px;top:679px"></div><div class="cell" style="left:532px;top:674px;width:60px;text-align:right;color:#000">1,009,935</div><div class="cell" style="left:594px;top:674px;width:58px;text-align:right;color:#000">158,065.0</div><div class="cell" style="left:656px;top:674px;width:58px;text-align:right;color:#000">1,168,000</div><div class="cell" style="left:719px;top:674px;width:62px;text-align:center;color:#000">###</div><div class="tri tl" style="left:719px;top:679px"></div><div class="tri tr" style="left:776.5px;top:679px"></div><div class="cell" style="left:844px;top:674px">-</div><div class="cell" style="left:36px;top:692px;width:62px;text-align:center;color:#000">20</div><div class="cell" style="left:99px;top:692px;width:62px;text-align:center;color:#000">###</div><div class="tri tl" style="left:99px;top:697px"></div><div class="tri tr" style="left:156.5px;top:697px"></div><div class="cell" style="left:161px;top:692px;width:62px;text-align:center;color:#000">###</div><div class="tri tl" style="left:161px;top:697px"></div><div class="tri tr" style="left:218.5px;top:697px"></div><div class="cell" style="left:222px;top:692px;width:62px;text-align:center;color:#000">30</div><div class="cell" style="left:284px;top:692px;width:58px;text-align:right;color:#000">140,383.0</div><div class="cell" style="left:346px;top:692px;width:58px;text-align:right;color:#000">1,004,819</div><div class="cell" style="left:409px;top:692px;width:62px;text-align:center;color:#000">###</div><div class="tri tl" style="left:409px;top:697px"></div><div class="tri tr" style="left:466.5px;top:697px"></div><div class="cell" style="left:471px;top:692px;width:62px;text-align:center;color:#000">###</div><div class="tri tl" style="left:471px;top:697px"></div><div class="tri tr" style="left:528.5px;top:697px"></div><div class="cell" style="left:532px;top:692px;width:60px;text-align:right;color:#000">1,004,819</div><div class="cell" style="left:594px;top:692px;width:58px;text-align:right;color:#000">140,383.0</div><div class="cell" style="left:656px;top:692px;width:58px;text-align:right;color:#000">1,145,202</div><div class="cell" style="left:719px;top:692px;width:62px;text-align:center;color:#000">###</div><div class="tri tl" style="left:719px;top:697px"></div><div class="tri tr" style="left:776.5px;top:697px"></div><div class="cell" style="left:844px;top:692px">-</div><div class="cell" style="left:36px;top:710px;width:62px;text-align:center;color:#000">21</div><div class="cell" style="left:99px;top:710px;width:62px;text-align:center;color:#000">###</div><div class="tri tl" style="left:99px;top:715px"></div><div class="tri tr" style="left:156.5px;top:715px"></div><div class="cell" style="left:161px;top:710px;width:62px;text-align:center;color:#000">###</div><div class="tri tl" style="left:161px;top:715px"></div><div class="tri tr" style="left:218.5px;top:715px"></div><div class="cell" style="left:222px;top:710px;width:62px;text-align:center;color:#000">30</div><div class="cell" style="left:284px;top:710px;width:58px;text-align:right;color:#000">132,620.0</div><div class="cell" style="left:346px;top:710px;width:58px;text-align:right;color:#000">1,004,819</div><div class="cell" style="left:409px;top:710px;width:62px;text-align:center;color:#000">###</div><div class="tri tl" style="left:409px;top:715px"></div><div class="tri tr" style="left:466.5px;top:715px"></div><div class="cell" style="left:471px;top:710px;width:62px;text-align:center;color:#000">###</div><div class="tri tl" style="left:471px;top:715px"></div><div class="tri tr" style="left:528.5px;top:715px"></div><div class="cell" style="left:532px;top:710px;width:60px;text-align:right;color:#000">1,004,819</div><div class="cell" style="left:594px;top:710px;width:58px;text-align:right;color:#000">132,620.0</div><div class="cell" style="left:656px;top:710px;width:58px;text-align:right;color:#000">1,137,439</div><div class="cell" style="left:719px;top:710px;width:62px;text-align:center;color:#000">###</div><div class="tri tl" style="left:719px;top:715px"></div><div class="tri tr" style="left:776.5px;top:715px"></div><div class="cell" style="left:844px;top:710px">-</div><div class="cell" style="left:36px;top:728px;width:62px;text-align:center;color:#000">22</div><div class="cell" style="left:99px;top:728px;width:62px;text-align:center;color:#000">###</div><div class="tri tl" style="left:99px;top:733px"></div><div class="tri tr" style="left:156.5px;top:733px"></div><div class="cell" style="left:161px;top:728px;width:62px;text-align:center;color:#000">###</div><div class="tri tl" style="left:161px;top:733px"></div><div class="tri tr" style="left:218.5px;top:733px"></div><div class="cell" style="left:222px;top:728px;width:62px;text-align:center;color:#000">31</div><div class="cell" style="left:284px;top:728px;width:58px;text-align:right;color:#000">129,019.0</div><div class="cell" style="left:346px;top:728px;width:58px;text-align:right;color:#000">1,004,819</div><div class="cell" style="left:409px;top:728px;width:62px;text-align:center;color:#000">###</div><div class="tri tl" style="left:409px;top:733px"></div><div class="tri tr" style="left:466.5px;top:733px"></div><div class="cell" style="left:471px;top:728px;width:62px;text-align:center;color:#000">###</div><div class="tri tl" style="left:471px;top:733px"></div><div class="tri tr" style="left:528.5px;top:733px"></div><div class="cell" style="left:532px;top:728px;width:60px;text-align:right;color:#000">1,005,051</div><div class="cell" style="left:594px;top:728px;width:58px;text-align:right;color:#000">129,019.0</div><div class="cell" style="left:656px;top:728px;width:58px;text-align:right;color:#000">1,135,222</div><div class="cell" style="left:719px;top:728px;width:62px;text-align:center;color:#000">###</div><div class="tri tl" style="left:719px;top:733px"></div><div class="tri tr" style="left:776.5px;top:733px"></div><div class="cell" style="left:780px;top:728px;width:61px;text-align:right;color:#000">1,152</div><div class="cell" style="left:843px;top:728px;width:62px;text-align:center;color:#000">###</div><div class="tri tl" style="left:843px;top:733px"></div><div class="tri tr" style="left:900.5px;top:733px"></div><div class="cell" style="left:36px;top:746px;width:62px;text-align:center;color:#000">23</div><div class="cell" style="left:99px;top:746px;width:62px;text-align:center;color:#000">###</div><div class="tri tl" style="left:99px;top:751px"></div><div class="tri tr" style="left:156.5px;top:751px"></div><div class="cell" style="left:161px;top:746px;width:62px;text-align:center;color:#000">###</div><div class="tri tl" style="left:161px;top:751px"></div><div class="tri tr" style="left:218.5px;top:751px"></div><div class="cell" style="left:222px;top:746px;width:62px;text-align:center;color:#000">31</div><div class="cell" style="left:284px;top:746px;width:58px;text-align:right;color:#000">120,995.0</div><div class="cell" style="left:346px;top:746px;width:58px;text-align:right;color:#000">1,004,819</div><div class="cell" style="left:409px;top:746px;width:62px;text-align:center;color:#000">###</div><div class="tri tl" style="left:409px;top:751px"></div><div class="tri tr" style="left:466.5px;top:751px"></div><div class="cell" style="left:471px;top:746px;width:62px;text-align:center;color:#000">###</div><div class="tri tl" style="left:471px;top:751px"></div><div class="tri tr" style="left:528.5px;top:751px"></div><div class="cell" style="left:532px;top:746px;width:60px;text-align:right;color:#000">1,004,821</div><div class="cell" style="left:594px;top:746px;width:58px;text-align:right;color:#000">120,995.0</div><div class="cell" style="left:656px;top:746px;width:58px;text-align:right;color:#000">1,126,198</div><div class="cell" style="left:719px;top:746px;width:62px;text-align:center;color:#000">###</div><div class="tri tl" style="left:719px;top:751px"></div><div class="tri tr" style="left:776.5px;top:751px"></div><div class="cell" style="left:780px;top:746px;width:61px;text-align:right;color:#000">382</div><div class="cell" style="left:843px;top:746px;width:62px;text-align:center;color:#000">###</div><div class="tri tl" style="left:843px;top:751px"></div><div class="tri tr" style="left:900.5px;top:751px"></div><div class="cell" style="left:36px;top:764px;width:62px;text-align:center;color:#000">24</div><div class="cell" style="left:99px;top:764px;width:62px;text-align:center;color:#000">###</div><div class="tri tl" style="left:99px;top:769px"></div><div class="tri tr" style="left:156.5px;top:769px"></div><div class="cell" style="left:161px;top:764px;width:62px;text-align:center;color:#000">###</div><div class="tri tl" style="left:161px;top:769px"></div><div class="tri tr" style="left:218.5px;top:769px"></div><div class="cell" style="left:222px;top:764px;width:62px;text-align:center;color:#000">32</div><div class="cell" style="left:284px;top:764px;width:58px;text-align:right;color:#000">116,617.0</div><div class="cell" style="left:346px;top:764px;width:58px;text-align:right;color:#000">1,004,819</div><div class="cell" style="left:409px;top:764px;width:62px;text-align:center;color:#000">###</div><div class="tri tl" style="left:409px;top:769px"></div><div class="tri tr" style="left:466.5px;top:769px"></div><div class="cell" style="left:471px;top:764px;width:62px;text-align:center;color:#000">###</div><div class="tri tl" style="left:471px;top:769px"></div><div class="tri tr" style="left:528.5px;top:769px"></div><div class="cell" style="left:532px;top:764px;width:60px;text-align:right;color:#000">1,004,819</div><div class="cell" style="left:594px;top:764px;width:58px;text-align:right;color:#000">116,617.0</div><div class="cell" style="left:656px;top:764px;width:58px;text-align:right;color:#000">1,126,756</div><div class="cell" style="left:719px;top:764px;width:62px;text-align:center;color:#000">###</div><div class="tri tl" style="left:719px;top:769px"></div><div class="tri tr" style="left:776.5px;top:769px"></div><div class="cell" style="left:780px;top:764px;width:61px;text-align:right;color:#000">5,320</div><div class="cell" style="left:843px;top:764px;width:62px;text-align:center;color:#000">###</div><div class="tri tl" style="left:843px;top:769px"></div><div class="tri tr" style="left:900.5px;top:769px"></div><div class="cell" style="left:36px;top:782px;width:62px;text-align:center;color:#000">25</div><div class="cell" style="left:99px;top:782px;width:62px;text-align:center;color:#000">###</div><div class="tri tl" style="left:99px;top:787px"></div><div class="tri tr" style="left:156.5px;top:787px"></div><div class="cell" style="left:161px;top:782px;width:62px;text-align:center;color:#000">###</div><div class="tri tl" style="left:161px;top:787px"></div><div class="tri tr" style="left:218.5px;top:787px"></div><div class="cell" style="left:222px;top:782px;width:62px;text-align:center;color:#000">29</div><div class="cell" style="left:284px;top:782px;width:58px;text-align:right;color:#000">98,180.0</div><div class="cell" style="left:346px;top:782px;width:58px;text-align:right;color:#000">1,004,819</div><div class="cell" style="left:409px;top:782px;width:62px;text-align:center;color:#000">###</div><div class="tri tl" style="left:409px;top:787px"></div><div class="tri tr" style="left:466.5px;top:787px"></div><div class="cell" style="left:471px;top:782px;width:62px;text-align:center;color:#000">###</div><div class="tri tl" style="left:471px;top:787px"></div><div class="tri tr" style="left:528.5px;top:787px"></div><div class="cell" style="left:532px;top:782px;width:60px;text-align:right;color:#000">1,003,202</div><div class="cell" style="left:594px;top:782px;width:58px;text-align:right;color:#000">98,180.0</div><div class="cell" style="left:656px;top:782px;width:58px;text-align:right;color:#000">1,104,000</div><div class="cell" style="left:719px;top:782px;width:62px;text-align:center;color:#000">###</div><div class="tri tl" style="left:719px;top:787px"></div><div class="tri tr" style="left:776.5px;top:787px"></div><div class="cell" style="left:780px;top:782px;width:61px;text-align:right;color:#000">2,618</div><div class="cell" style="left:843px;top:782px;width:62px;text-align:center;color:#000">###</div><div class="tri tl" style="left:843px;top:787px"></div><div class="tri tr" style="left:900.5px;top:787px"></div><div class="cell" style="left:36px;top:800px;width:62px;text-align:center;color:#000">26</div><div class="cell" style="left:99px;top:800px;width:62px;text-align:center;color:#000">###</div><div class="tri tl" style="left:99px;top:805px"></div><div class="tri tr" style="left:156.5px;top:805px"></div><div class="cell" style="left:161px;top:800px;width:62px;text-align:center;color:#000">###</div><div class="tri tl" style="left:161px;top:805px"></div><div class="tri tr" style="left:218.5px;top:805px"></div><div class="cell" style="left:222px;top:800px;width:62px;text-align:center;color:#000">28</div><div class="cell" style="left:284px;top:800px;width:58px;text-align:right;color:#000">87,560.0</div><div class="cell" style="left:346px;top:800px;width:58px;text-align:right;color:#000">1,004,819</div><div class="cell" style="left:409px;top:800px;width:62px;text-align:center;color:#000">###</div><div class="tri tl" style="left:409px;top:805px"></div><div class="tri tr" style="left:466.5px;top:805px"></div><div class="cell" style="left:471px;top:800px;width:62px;text-align:center;color:#000">###</div><div class="tri tl" style="left:471px;top:805px"></div><div class="tri tr" style="left:528.5px;top:805px"></div><div class="cell" style="left:532px;top:800px;width:60px;text-align:right;color:#000">1,006,830</div><div class="cell" style="left:594px;top:800px;width:58px;text-align:right;color:#000">87,560.0</div><div class="cell" style="left:656px;top:800px;width:58px;text-align:right;color:#000">1,100,000</div><div class="cell" style="left:719px;top:800px;width:62px;text-align:center;color:#000">###</div><div class="tri tl" style="left:719px;top:805px"></div><div class="tri tr" style="left:776.5px;top:805px"></div><div class="cell" style="left:780px;top:800px;width:61px;text-align:right;color:#000">5,610</div><div class="cell" style="left:843px;top:800px;width:62px;text-align:center;color:#000">###</div><div class="tri tl" style="left:843px;top:805px"></div><div class="tri tr" style="left:900.5px;top:805px"></div><div class="cell" style="left:36px;top:818px;width:62px;text-align:center;color:#000">27</div><div class="cell" style="left:99px;top:818px;width:62px;text-align:center;color:#000">###</div><div class="tri tl" style="left:99px;top:823px"></div><div class="tri tr" style="left:156.5px;top:823px"></div><div class="cell" style="left:161px;top:818px;width:62px;text-align:center;color:#000">###</div><div class="tri tl" style="left:161px;top:823px"></div><div class="tri tr" style="left:218.5px;top:823px"></div><div class="cell" style="left:222px;top:818px;width:62px;text-align:center;color:#000">31</div><div class="cell" style="left:284px;top:818px;width:58px;text-align:right;color:#000">88,904.0</div><div class="cell" style="left:346px;top:818px;width:58px;text-align:right;color:#000">1,004,819</div><div class="cell" style="left:409px;top:818px;width:62px;text-align:center;color:#000">###</div><div class="tri tl" style="left:409px;top:823px"></div><div class="tri tr" style="left:466.5px;top:823px"></div><div class="cell" style="left:471px;top:818px;width:62px;text-align:center;color:#000">###</div><div class="tri tl" style="left:471px;top:823px"></div><div class="tri tr" style="left:528.5px;top:823px"></div><div class="cell" style="left:532px;top:818px;width:60px;text-align:right;color:#000">908,671</div><div class="cell" style="left:594px;top:818px;width:58px;text-align:right;color:#000">88,904.0</div><div class="cell" style="left:780px;top:818px;width:61px;text-align:right;color:#000">16,720</div><div class="cell" style="left:843px;top:818px;width:62px;text-align:center;color:#000">###</div><div class="tri tl" style="left:843px;top:823px"></div><div class="tri tr" style="left:900.5px;top:823px"></div><div class="cell" style="left:967px;top:818px;width:62px;text-align:center;color:#e0201c">###</div><div class="tri tl" style="left:967px;top:823px"></div><div class="tri tr" style="left:1024.5px;top:823px"></div><div class="cell" style="left:36px;top:836px;width:62px;text-align:center;color:#000">28</div><div class="cell" style="left:99px;top:836px;width:62px;text-align:center;color:#000">###</div><div class="tri tl" style="left:99px;top:841px"></div><div class="tri tr" style="left:156.5px;top:841px"></div><div class="cell" style="left:161px;top:836px;width:62px;text-align:center;color:#000">###</div><div class="tri tl" style="left:161px;top:841px"></div><div class="tri tr" style="left:218.5px;top:841px"></div><div class="cell" style="left:222px;top:836px;width:62px;text-align:center;color:#000">31</div><div class="cell" style="left:284px;top:836px;width:58px;text-align:right;color:#000">88,904.0</div><div class="cell" style="left:346px;top:836px;width:58px;text-align:right;color:#000">1,004,819</div><div class="cell" style="left:409px;top:836px;width:62px;text-align:center;color:#000">###</div><div class="tri tl" style="left:409px;top:841px"></div><div class="tri tr" style="left:466.5px;top:841px"></div><div class="cell" style="left:471px;top:836px;width:62px;text-align:center;color:#000">###</div><div class="tri tl" style="left:471px;top:841px"></div><div class="tri tr" style="left:528.5px;top:841px"></div><div class="cell" style="left:594px;top:836px;width:58px;text-align:right;color:#000">88,904.0</div><div class="cell" style="left:656px;top:836px;width:58px;text-align:right;color:#000">1,108,772</div><div class="cell" style="left:719px;top:836px;width:62px;text-align:center;color:#000">###</div><div class="tri tl" style="left:719px;top:841px"></div><div class="tri tr" style="left:776.5px;top:841px"></div><div class="cell" style="left:780px;top:836px;width:61px;text-align:right;color:#000">5,573</div><div class="cell" style="left:843px;top:836px;width:62px;text-align:center;color:#000">###</div><div class="tri tl" style="left:843px;top:841px"></div><div class="tri tr" style="left:900.5px;top:841px"></div><div class="cell" style="left:36px;top:854px;width:62px;text-align:center;color:#000">27-1</div><div class="cell" style="left:99px;top:854px;width:62px;text-align:center;color:#000">###</div><div class="tri tl" style="left:99px;top:859px"></div><div class="tri tr" style="left:156.5px;top:859px"></div><div class="cell" style="left:161px;top:854px;width:62px;text-align:center;color:#000">###</div><div class="tri tl" style="left:161px;top:859px"></div><div class="tri tr" style="left:218.5px;top:859px"></div><div class="cell" style="left:222px;top:854px;width:62px;text-align:center;color:#000">45</div><div class="cell" style="left:471px;top:854px;width:62px;text-align:center;color:#000">###</div><div class="tri tl" style="left:471px;top:859px"></div><div class="tri tr" style="left:528.5px;top:859px"></div><div class="cell" style="left:532px;top:854px;width:60px;text-align:right;color:#000">96,148</div><div class="cell" style="left:780px;top:854px;width:61px;text-align:right;color:#000">1,470</div><div class="cell" style="left:843px;top:854px;width:62px;text-align:center;color:#000">###</div><div class="tri tl" style="left:843px;top:859px"></div><div class="tri tr" style="left:900.5px;top:859px"></div><div class="cell" style="left:36px;top:872px;width:62px;text-align:center;color:#000">28-1</div><div class="cell" style="left:99px;top:872px;width:62px;text-align:center;color:#000">###</div><div class="tri tl" style="left:99px;top:877px"></div><div class="tri tr" style="left:156.5px;top:877px"></div><div class="cell" style="left:161px;top:872px;width:62px;text-align:center;color:#000">###</div><div class="tri tl" style="left:161px;top:877px"></div><div class="tri tr" style="left:218.5px;top:877px"></div><div class="cell" style="left:222px;top:872px;width:62px;text-align:center;color:#000">45</div><div class="cell" style="left:471px;top:872px;width:62px;text-align:center;color:#000">###</div><div class="tri tl" style="left:471px;top:877px"></div><div class="tri tr" style="left:528.5px;top:877px"></div><div class="cell" style="left:532px;top:872px;width:60px;text-align:right;color:#000">906,100</div><div class="cell" style="left:780px;top:872px;width:61px;text-align:right;color:#000">15,361</div><div class="cell" style="left:843px;top:872px;width:62px;text-align:center;color:#000">###</div><div class="tri tl" style="left:843px;top:877px"></div><div class="tri tr" style="left:900.5px;top:877px"></div><div class="cell" style="left:36px;top:890px;width:62px;text-align:center;color:#000">29</div><div class="cell" style="left:99px;top:890px;width:62px;text-align:center;color:#000">###</div><div class="tri tl" style="left:99px;top:895px"></div><div class="tri tr" style="left:156.5px;top:895px"></div><div class="cell" style="left:161px;top:890px;width:62px;text-align:center;color:#000">###</div><div class="tri tl" style="left:161px;top:895px"></div><div class="tri tr" style="left:218.5px;top:895px"></div><div class="cell" style="left:222px;top:890px;width:62px;text-align:center;color:#000">30</div><div class="cell" style="left:284px;top:890px;width:58px;text-align:right;color:#000">79,015.0</div><div class="cell" style="left:346px;top:890px;width:58px;text-align:right;color:#000">1,004,819</div><div class="cell" style="left:409px;top:890px;width:62px;text-align:center;color:#000">###</div><div class="tri tl" style="left:409px;top:895px"></div><div class="tri tr" style="left:466.5px;top:895px"></div><div class="cell" style="left:471px;top:890px;width:62px;text-align:center;color:#000">###</div><div class="tri tl" style="left:471px;top:895px"></div><div class="tri tr" style="left:528.5px;top:895px"></div><div class="cell" style="left:594px;top:890px;width:58px;text-align:right;color:#000">79,015.0</div><div class="cell" style="left:656px;top:890px;width:58px;text-align:right;color:#000">1,108,772</div><div class="cell" style="left:719px;top:890px;width:62px;text-align:center;color:#000">###</div><div class="tri tl" style="left:719px;top:895px"></div><div class="tri tr" style="left:776.5px;top:895px"></div><div class="cell" style="left:780px;top:890px;width:61px;text-align:right;color:#000">10,678</div><div class="cell" style="left:843px;top:890px;width:62px;text-align:center;color:#000">###</div><div class="tri tl" style="left:843px;top:895px"></div><div class="tri tr" style="left:900.5px;top:895px"></div><div class="cell" style="left:36px;top:908px;width:62px;text-align:center;color:#000">30</div><div class="cell" style="left:99px;top:908px;width:62px;text-align:center;color:#000">###</div><div class="tri tl" style="left:99px;top:913px"></div><div class="tri tr" style="left:156.5px;top:913px"></div><div class="cell" style="left:161px;top:908px;width:62px;text-align:center;color:#000">###</div><div class="tri tl" style="left:161px;top:913px"></div><div class="tri tr" style="left:218.5px;top:913px"></div><div class="cell" style="left:222px;top:908px;width:62px;text-align:center;color:#000">30</div><div class="cell" style="left:284px;top:908px;width:58px;text-align:right;color:#e8282b">78,758.0</div><div class="cell" style="left:346px;top:908px;width:58px;text-align:right;color:#000">1,004,819</div><div class="cell" style="left:409px;top:908px;width:62px;text-align:center;color:#000">###</div><div class="tri tl" style="left:409px;top:913px"></div><div class="tri tr" style="left:466.5px;top:913px"></div><div class="cell" style="left:596px;top:908px">-</div><div class="cell" style="left:648px;top:908px">-</div><div class="cell" style="left:719px;top:908px;width:62px;text-align:center;color:#000">###</div><div class="tri tl" style="left:719px;top:913px"></div><div class="tri tr" style="left:776.5px;top:913px"></div><div class="cell" style="left:843px;top:908px;width:62px;text-align:center;color:#000">###</div><div class="tri tl" style="left:843px;top:913px"></div><div class="tri tr" style="left:900.5px;top:913px"></div><div class="cell" style="left:36px;top:926px;width:62px;text-align:center;color:#000">31</div><div class="cell" style="left:99px;top:926px;width:62px;text-align:center;color:#000">###</div><div class="tri tl" style="left:99px;top:931px"></div><div class="tri tr" style="left:156.5px;top:931px"></div><div class="cell" style="left:161px;top:926px;width:62px;text-align:center;color:#000">###</div><div class="tri tl" style="left:161px;top:931px"></div><div class="tri tr" style="left:218.5px;top:931px"></div><div class="cell" style="left:222px;top:926px;width:62px;text-align:center;color:#000">31</div><div class="cell" style="left:284px;top:926px;width:58px;text-align:right;color:#000">73,648.0</div><div class="cell" style="left:346px;top:926px;width:58px;text-align:right;color:#000">1,004,819</div><div class="cell" style="left:409px;top:926px;width:62px;text-align:center;color:#000">###</div><div class="tri tl" style="left:409px;top:931px"></div><div class="tri tr" style="left:466.5px;top:931px"></div><div class="cell" style="left:596px;top:926px">-</div><div class="cell" style="left:648px;top:926px">-</div><div class="cell" style="left:719px;top:926px;width:62px;text-align:center;color:#000">###</div><div class="tri tl" style="left:719px;top:931px"></div><div class="tri tr" style="left:776.5px;top:931px"></div><div class="cell" style="left:844px;top:926px">-</div><div class="cell" style="left:36px;top:944px;width:62px;text-align:center;color:#000">32</div><div class="cell" style="left:99px;top:944px;width:62px;text-align:center;color:#000">###</div><div class="tri tl" style="left:99px;top:949px"></div><div class="tri tr" style="left:156.5px;top:949px"></div><div class="cell" style="left:161px;top:944px;width:62px;text-align:center;color:#000">###</div><div class="tri tl" style="left:161px;top:949px"></div><div class="tri tr" style="left:218.5px;top:949px"></div><div class="cell" style="left:222px;top:944px;width:62px;text-align:center;color:#000">30</div><div class="cell" style="left:284px;top:944px;width:58px;text-align:right;color:#000">71,272.0</div><div class="cell" style="left:346px;top:944px;width:58px;text-align:right;color:#000">1,004,819</div><div class="cell" style="left:409px;top:944px;width:62px;text-align:center;color:#000">###</div><div class="tri tl" style="left:409px;top:949px"></div><div class="tri tr" style="left:466.5px;top:949px"></div><div class="cell" style="left:596px;top:944px">-</div><div class="cell" style="left:648px;top:944px">-</div><div class="cell" style="left:719px;top:944px;width:62px;text-align:center;color:#000">###</div><div class="tri tl" style="left:719px;top:949px"></div><div class="tri tr" style="left:776.5px;top:949px"></div><div class="cell" style="left:844px;top:944px">-</div><div class="cell" style="left:36px;top:962px;width:62px;text-align:center;color:#000">33</div><div class="cell" style="left:99px;top:962px;width:62px;text-align:center;color:#000">###</div><div class="tri tl" style="left:99px;top:967px"></div><div class="tri tr" style="left:156.5px;top:967px"></div><div class="cell" style="left:161px;top:962px;width:62px;text-align:center;color:#000">###</div><div class="tri tl" style="left:161px;top:967px"></div><div class="tri tr" style="left:218.5px;top:967px"></div><div class="cell" style="left:222px;top:962px;width:62px;text-align:center;color:#000">30</div><div class="cell" style="left:284px;top:962px;width:58px;text-align:right;color:#000">70,508.0</div><div class="cell" style="left:346px;top:962px;width:58px;text-align:right;color:#000">1,004,819</div><div class="cell" style="left:409px;top:962px;width:62px;text-align:center;color:#000">###</div><div class="tri tl" style="left:409px;top:967px"></div><div class="tri tr" style="left:466.5px;top:967px"></div><div class="cell" style="left:596px;top:962px">-</div><div class="cell" style="left:648px;top:962px">-</div><div class="cell" style="left:719px;top:962px;width:62px;text-align:center;color:#000">###</div><div class="tri tl" style="left:719px;top:967px"></div><div class="tri tr" style="left:776.5px;top:967px"></div><div class="cell" style="left:844px;top:962px">-</div></div><div class="a" style="left:0;top:220px;width:1849px;height:20px;background:#f8f8f8"></div><div class="ch" style="left:37px;width:62px">A</div><div class="a" style="left:36px;top:220px;width:1px;height:20px;background:#a8a8a8"></div><div class="ch" style="left:99px;width:62px">B</div><div class="a" style="left:98px;top:220px;width:1px;height:20px;background:#a8a8a8"></div><div class="ch" style="left:161px;width:62px">C</div><div class="a" style="left:160px;top:220px;width:1px;height:20px;background:#a8a8a8"></div><div class="ch" style="left:223px;width:62px">D</div><div class="a" style="left:222px;top:220px;width:1px;height:20px;background:#a8a8a8"></div><div class="ch" style="left:285px;width:62px">E</div><div class="a" style="left:284px;top:220px;width:1px;height:20px;background:#a8a8a8"></div><div class="ch" style="left:347px;width:62px">F</div><div class="a" style="left:346px;top:220px;width:1px;height:20px;background:#a8a8a8"></div><div class="ch" style="left:409px;width:62px">G</div><div class="a" style="left:408px;top:220px;width:1px;height:20px;background:#a8a8a8"></div><div class="ch" style="left:471px;width:62px">H</div><div class="a" style="left:470px;top:220px;width:1px;height:20px;background:#a8a8a8"></div><div class="ch" style="left:533px;width:62px">I</div><div class="a" style="left:532px;top:220px;width:1px;height:20px;background:#a8a8a8"></div><div class="ch" style="left:595px;width:62px">J</div><div class="a" style="left:594px;top:220px;width:1px;height:20px;background:#a8a8a8"></div><div class="ch" style="left:657px;width:62px">K</div><div class="a" style="left:656px;top:220px;width:1px;height:20px;background:#a8a8a8"></div><div class="ch" style="left:719px;width:62px">L</div><div class="a" style="left:718px;top:220px;width:1px;height:20px;background:#a8a8a8"></div><div class="a" style="left:780px;top:220px;width:62px;height:20px;background:#e95420"></div><div class="ch" style="left:780px;width:62px;color:#fff;font-weight:bold">M</div><div class="a" style="left:780px;top:220px;width:1px;height:20px;background:#a8a8a8"></div><div class="ch" style="left:843px;width:62px">N</div><div class="a" style="left:842px;top:220px;width:1px;height:20px;background:#a8a8a8"></div><div class="ch" style="left:905px;width:62px">O</div><div class="a" style="left:904px;top:220px;width:1px;height:20px;background:#a8a8a8"></div><div class="ch" style="left:967px;width:62px">P</div><div class="a" style="left:966px;top:220px;width:1px;height:20px;background:#a8a8a8"></div><div class="ch" style="left:1029px;width:62px">Q</div><div class="a" style="left:1028px;top:220px;width:1px;height:20px;background:#a8a8a8"></div><div class="ch" style="left:1091px;width:62px">R</div><div class="a" style="left:1090px;top:220px;width:1px;height:20px;background:#a8a8a8"></div><div class="ch" style="left:1153px;width:62px">S</div><div class="a" style="left:1152px;top:220px;width:1px;height:20px;background:#a8a8a8"></div><div class="ch" style="left:1215px;width:62px">T</div><div class="a" style="left:1214px;top:220px;width:1px;height:20px;background:#a8a8a8"></div><div class="ch" style="left:1277px;width:62px">U</div><div class="a" style="left:1276px;top:220px;width:1px;height:20px;background:#a8a8a8"></div><div class="ch" style="left:1339px;width:62px">V</div><div class="a" style="left:1338px;top:220px;width:1px;height:20px;background:#a8a8a8"></div><div class="ch" style="left:1401px;width:62px">W</div><div class="a" style="left:1400px;top:220px;width:1px;height:20px;background:#a8a8a8"></div><div class="ch" style="left:1463px;width:62px">X</div><div class="a" style="left:1462px;top:220px;width:1px;height:20px;background:#a8a8a8"></div><div class="ch" style="left:1525px;width:62px">Y</div><div class="a" style="left:1524px;top:220px;width:1px;height:20px;background:#a8a8a8"></div><div class="ch" style="left:1587px;width:62px">Z</div><div class="a" style="left:1586px;top:220px;width:1px;height:20px;background:#a8a8a8"></div><div class="ch" style="left:1649px;width:62px">AA</div><div class="a" style="left:1648px;top:220px;width:1px;height:20px;background:#a8a8a8"></div><div class="ch" style="left:1711px;width:62px">AB</div><div class="a" style="left:1710px;top:220px;width:1px;height:20px;background:#a8a8a8"></div><div class="ch" style="left:1773px;width:62px">AC</div><div class="a" style="left:1772px;top:220px;width:1px;height:20px;background:#a8a8a8"></div><div class="a" style="left:1834px;top:220px;width:1px;height:20px;background:#a8a8a8"></div><div class="a" style="left:0;top:240px;width:1849px;height:1px;background:#a0a0a0"></div><div class="a" style="left:0;top:241px;width:36px;height:726px;background:#f8f8f8;overflow:hidden"><div class="rh" style="top:0px">7</div><div class="a" style="left:0;top:17px;width:36px;height:1px;background:#a8a8a8"></div><div class="rh" style="top:18px">8</div><div class="a" style="left:0;top:35px;width:36px;height:1px;background:#a8a8a8"></div><div class="rh" style="top:36px">9</div><div class="a" style="left:0;top:53px;width:36px;height:1px;background:#a8a8a8"></div><div class="rh" style="top:54px">10</div><div class="a" style="left:0;top:71px;width:36px;height:1px;background:#a8a8a8"></div><div class="rh" style="top:72px">11</div><div class="a" style="left:0;top:89px;width:36px;height:1px;background:#a8a8a8"></div><div class="rh" style="top:90px">12</div><div class="a" style="left:0;top:107px;width:36px;height:1px;background:#a8a8a8"></div><div class="rh" style="top:108px">13</div><div class="a" style="left:0;top:125px;width:36px;height:1px;background:#a8a8a8"></div><div class="rh" style="top:126px">14</div><div class="a" style="left:0;top:143px;width:36px;height:1px;background:#a8a8a8"></div><div class="rh" style="top:144px">15</div><div class="a" style="left:0;top:161px;width:36px;height:1px;background:#a8a8a8"></div><div class="rh" style="top:162px">16</div><div class="a" style="left:0;top:179px;width:36px;height:1px;background:#a8a8a8"></div><div class="rh" style="top:180px">17</div><div class="a" style="left:0;top:197px;width:36px;height:1px;background:#a8a8a8"></div><div class="rh" style="top:198px">18</div><div class="a" style="left:0;top:215px;width:36px;height:1px;background:#a8a8a8"></div><div class="rh" style="top:216px">19</div><div class="a" style="left:0;top:233px;width:36px;height:1px;background:#a8a8a8"></div><div class="rh" style="top:234px">20</div><div class="a" style="left:0;top:251px;width:36px;height:1px;background:#a8a8a8"></div><div class="rh" style="top:252px">21</div><div class="a" style="left:0;top:269px;width:36px;height:1px;background:#a8a8a8"></div><div class="rh" style="top:270px">22</div><div class="a" style="left:0;top:287px;width:36px;height:1px;background:#a8a8a8"></div><div class="rh" style="top:288px">23</div><div class="a" style="left:0;top:305px;width:36px;height:1px;background:#a8a8a8"></div><div class="rh" style="top:306px">24</div><div class="a" style="left:0;top:323px;width:36px;height:1px;background:#a8a8a8"></div><div class="rh" style="top:324px">25</div><div class="a" style="left:0;top:341px;width:36px;height:1px;background:#a8a8a8"></div><div class="rh" style="top:342px">26</div><div class="a" style="left:0;top:359px;width:36px;height:1px;background:#a8a8a8"></div><div class="rh" style="top:360px">27</div><div class="a" style="left:0;top:377px;width:36px;height:1px;background:#a8a8a8"></div><div class="rh" style="top:378px">28</div><div class="a" style="left:0;top:395px;width:36px;height:1px;background:#a8a8a8"></div><div class="rh" style="top:396px">29</div><div class="a" style="left:0;top:413px;width:36px;height:1px;background:#a8a8a8"></div><div class="rh" style="top:414px">30</div><div class="a" style="left:0;top:431px;width:36px;height:1px;background:#a8a8a8"></div><div class="rh" style="top:432px">31</div><div class="a" style="left:0;top:449px;width:36px;height:1px;background:#a8a8a8"></div><div class="rh" style="top:450px">32</div><div class="a" style="left:0;top:467px;width:36px;height:1px;background:#a8a8a8"></div><div class="rh" style="top:468px">33</div><div class="a" style="left:0;top:485px;width:36px;height:1px;background:#a8a8a8"></div><div class="rh" style="top:486px">34</div><div class="a" style="left:0;top:503px;width:36px;height:1px;background:#a8a8a8"></div><div class="rh" style="top:504px">35</div><div class="a" style="left:0;top:521px;width:36px;height:1px;background:#a8a8a8"></div><div class="rh" style="top:522px">36</div><div class="a" style="left:0;top:539px;width:36px;height:1px;background:#a8a8a8"></div><div class="rh" style="top:540px">37</div><div class="a" style="left:0;top:557px;width:36px;height:1px;background:#a8a8a8"></div><div class="rh" style="top:558px">38</div><div class="a" style="left:0;top:575px;width:36px;height:1px;background:#a8a8a8"></div><div class="rh" style="top:576px">39</div><div class="a" style="left:0;top:593px;width:36px;height:1px;background:#a8a8a8"></div><div class="rh" style="top:594px">40</div><div class="a" style="left:0;top:611px;width:36px;height:1px;background:#a8a8a8"></div><div class="rh" style="top:612px">41</div><div class="a" style="left:0;top:629px;width:36px;height:1px;background:#a8a8a8"></div><div class="rh" style="top:630px">42</div><div class="a" style="left:0;top:647px;width:36px;height:1px;background:#a8a8a8"></div><div class="rh" style="top:648px">43</div><div class="a" style="left:0;top:665px;width:36px;height:1px;background:#a8a8a8"></div><div class="rh" style="top:666px">44</div><div class="a" style="left:0;top:683px;width:36px;height:1px;background:#a8a8a8"></div><div class="rh" style="top:684px">45</div><div class="a" style="left:0;top:701px;width:36px;height:1px;background:#a8a8a8"></div><div class="rh" style="top:702px">46</div><div class="a" style="left:0;top:719px;width:36px;height:1px;background:#a8a8a8"></div><div class="a" style="left:0;top:719px;width:36px;height:18px;background:#e95420"></div><div class="rh" style="top:719px;color:#fff;font-weight:bold">47</div><div class="a" style="left:0;top:737px;width:36px;height:1px;background:#a8a8a8"></div></div><div class="a" style="left:36px;top:220px;width:1px;height:747px;background:#a0a0a0"></div><div class="a" style="left:779px;top:959px;width:64px;height:8px;overflow:hidden"><div class="a" style="left:0;top:0;width:64px;height:24px;border:3px solid #e25a26"></div></div><div class="a" style="left:3px;top:970px;width:884px;height:6px;border-radius:3px;background:#8c8c8c"></div><div class="a" style="left:1849px;top:220px;width:12px;height:5px;background:#c4c4c4"></div><div class="a" style="left:1851px;top:222px;width:8px;height:1.2px;background:#333"></div><div class="a" style="left:1852px;top:272px;width:6px;height:286px;border-radius:3px;background:#8c8c8c"></div><div class="a" style="left:1844px;top:967px;width:5px;height:12px;background:#bcbcbc"></div><div class="a" style="left:1846px;top:969px;width:1.2px;height:7px;background:#222"></div><div class="a" style="left:0;top:976px;width:1862px;height:28px;background:#fafafa"></div><div class="a" style="left:143px;top:980px;width:102px;height:22px;background:#fff"></div><div class="a" style="left:1861px;top:178px;width:59px;height:826px;background:#f8f8f8;border-left:1px solid #cfcfcf"></div><svg class="a" style="left:1885.0px;top:191.0px" width="14" height="12" viewBox="0 0 14 12"><path d="M1 1.5h12M1 5.5h12M1 9.5h12" stroke="#333" stroke-width="1"/></svg><svg class="a" style="left:1883.0px;top:233.0px" width="18" height="18" viewBox="0 0 18 18"><rect x="1" y="1" width="16" height="7" rx="3.5" fill="#e95420"/><circle cx="13.5" cy="4.5" r="2.3" fill="#fff"/><rect x="1" y="10" width="16" height="7" rx="3.5" fill="#e95420"/><circle cx="4.5" cy="13.5" r="2.3" fill="#fff"/></svg><svg class="a" style="left:1879.0px;top:272.0px" width="24" height="24" viewBox="0 0 24 24"><path d="M9 8l5 5-4 4-5-5z" fill="#fff" stroke="#333" stroke-width="1.2" stroke-linejoin="round"/><path d="M6.5 10.5l-2.5 2.5 2 2" stroke="#333" stroke-width="1.1" fill="none"/><path d="M6 16l-4 4" stroke="#f08a7a" stroke-width="2.2" stroke-linecap="round"/><text x="12" y="12" font-size="12" font-weight="bold" fill="#222" font-family="Liberation Sans">A</text></svg><svg class="a" style="left:1881.0px;top:316.0px" width="22" height="20" viewBox="0 0 22 20"><rect x="1" y="1" width="15" height="13" rx="1.5" fill="#c653b8" stroke="#7a2e70"/><rect x="5" y="5" width="15" height="13" rx="1.5" fill="#d86ac9" stroke="#7a2e70"/><path d="M8 15l3-4 2 2 2-2 3 4z" fill="#fff"/></svg><svg class="a" style="left:1882.0px;top:358.0px" width="20" height="20" viewBox="0 0 20 20"><circle cx="10" cy="10" r="9" fill="#5b8de0" stroke="#3760a8"/><path d="M14 6l-3 6-5 2 3-5z" fill="#fff"/></svg><div class="t" style="left:1885px;top:398px;font-size:21px;color:#222;line-height:22px">f</div><svg class="a" style="left:1893.0px;top:411.0px" width="8" height="8" viewBox="0 0 8 8"><path d="M1 1l6 6M7 1L1 7" stroke="#222" stroke-width="1.5"/></svg><div class="a" style="left:1861px;top:553px;width:7px;height:73px;background:#9a9a9a"></div><div class="a" style="left:1863px;top:586px;width:0;height:0;border-top:3px solid transparent;border-bottom:3px solid transparent;border-left:3px solid #fff"></div><svg class="a" style="left:9px;top:983px" width="18" height="14"><path d="M2 1v12" stroke="#f0a080" stroke-width="1.6"/><path d="M4 7h12M4 7l4-4M4 7l4 4" stroke="#f0a080" stroke-width="1.6" fill="none"/></svg><svg class="a" style="left:34px;top:984px" width="16" height="12"><path d="M1 1v10" stroke="#999" stroke-width="1.6"/><path d="M8 1L2 6l6 5zM15 1L9 6l6 5z" fill="#999"/></svg><svg class="a" style="left:60px;top:984px" width="16" height="12"><path d="M15 1v10" stroke="#999" stroke-width="1.6"/><path d="M1 1l6 5-6 5zM8 1l6 5-6 5z" fill="#999"/></svg><svg class="a" style="left:84px;top:983px" width="18" height="14"><path d="M16 1v12" stroke="#f0a080" stroke-width="1.6"/><path d="M2 7h12M14 7l-4-4M14 7l-4 4" stroke="#f0a080" stroke-width="1.6" fill="none"/></svg><svg class="a" style="left:116px;top:982px" width="18" height="18"><path d="M3.5 1h6l4 4v10.5a1.5 1.5 0 0 1-1.5 1.5H3.5A1.5 1.5 0 0 1 2 15.5V2.5A1.5 1.5 0 0 1 3.5 1z" fill="#fff" stroke="#555" stroke-width="1.1"/><path d="M9.5 1v4h4" fill="none" stroke="#555" stroke-width="1"/><circle cx="12.5" cy="14" r="3.6" fill="#2f9a2f" stroke="#fff" stroke-width="0.8"/><path d="M10.6 14h3.8M12.5 12.1v3.8" stroke="#fff" stroke-width="1.1"/></svg><div class="t" style="left:155px;top:982px;font-size:13px;font-weight:bold;color:#333;line-height:18px;transform:scaleX(0.84);transform-origin:0 0">대출상환스케쥴</div><div class="a" style="left:143px;top:1001px;width:102px;height:3px;background:#9a9a9a"></div><div class="t" style="left:256px;top:982px;font-size:13px;color:#444;line-height:18px;transform:scaleX(0.93);transform-origin:0 0">Sheet1</div><div class="a" style="left:307px;top:983px;width:1px;height:16px;background:#ccc"></div><div class="t" style="left:320px;top:982px;font-size:13px;color:#444;line-height:18px;transform:scaleX(0.85);transform-origin:0 0">연체내역</div><div class="a" style="left:375px;top:983px;width:1px;height:16px;background:#ccc"></div><div class="t" style="left:388px;top:982px;font-size:13px;color:#444;line-height:18px;transform:scaleX(0.85);transform-origin:0 0">대출상환내역서</div><div class="a" style="left:477px;top:983px;width:1px;height:16px;background:#ccc"></div><div class="a" style="left:0;top:1004px;width:1920px;height:24px;background:#fafafa;border-top:1px solid #d6d6d6"></div><svg class="a" style="left:10px;top:1008px" width="14" height="16"><path d="M5 1h4v6h3l-5 6-5-6h3z" fill="#8cc43c" stroke="#5f8f26" stroke-width="0.8"/><path d="M2 15h10" stroke="#444" stroke-width="1.2"/></svg><div class="a" style="left:30px;top:1007px;width:1px;height:18px;background:#dedede"></div><div class="t" style="left:39px;top:1009px;font-size:12px;color:#444;line-height:16px">1 / 4 시트</div><div class="a" style="left:292px;top:1007px;width:1px;height:18px;background:#dedede"></div><div class="a" style="left:562px;top:1007px;width:1px;height:18px;background:#dedede"></div><div class="t" style="left:571px;top:1009px;font-size:12px;color:#444;line-height:16px;transform:scaleX(0.94);transform-origin:0 0">PageStyle_대출상환스케쥴</div><div class="a" style="left:911px;top:1007px;width:1px;height:18px;background:#dedede"></div><div class="t" style="left:1016px;top:1009px;font-size:12px;color:#444;line-height:16px;transform:scaleX(0.93);transform-origin:0 0">영어(미국)</div><div class="a" style="left:1170px;top:1007px;width:1px;height:18px;background:#dedede"></div><div class="a" style="left:1238px;top:1007px;width:1px;height:18px;background:#dedede"></div><div class="a" style="left:1249px;top:1012px;width:17px;height:9px;border:1px solid #c0603a"></div><div class="t" style="left:1267px;top:1007px;font-size:15px;color:#333;line-height:18px;font-family:'Liberation Serif',serif">I</div><div class="a" style="left:1283px;top:1007px;width:1px;height:18px;background:#dedede"></div><div class="a" style="left:1312px;top:1007px;width:1px;height:18px;background:#dedede"></div><div class="t" style="left:1484px;top:1009px;font-size:12px;color:#444;line-height:16px;transform:scaleX(0.94);transform-origin:0 0">평균: 0; 합계: 0</div><div class="a" style="left:1728px;top:1007px;width:1px;height:18px;background:#dedede"></div><div class="a" style="left:1738px;top:1016px;width:9px;height:1.5px;background:#333"></div><div class="a" style="left:1753px;top:1015.5px;width:97px;height:2.5px;background:#9a9a9a;border-radius:1px"></div><div class="a" style="left:1800px;top:1013px;width:2px;height:7px;background:#9a9a9a"></div><div class="a" style="left:1790px;top:1012px;width:9px;height:9px;border-radius:5px;border:1.3px solid #444;background:#fff"></div><div class="a" style="left:1855px;top:1016px;width:9px;height:1.5px;background:#333"></div><div class="a" style="left:1859px;top:1012px;width:1.5px;height:9px;background:#333"></div><div class="a" style="left:1873px;top:1007px;width:1px;height:18px;background:#dedede"></div><div class="t" style="left:1883px;top:1009px;font-size:12px;color:#444;line-height:16px">90%</div><div class="a" style="left:0;top:1028px;width:1920px;height:52px;background:linear-gradient(90deg,#25161b,#2b1a1e 50%,#2a1a1c)"></div><svg class="a" style="left:11.0px;top:1036.0px" width="36" height="36" viewBox="0 0 36 36"><circle cx="18" cy="18" r="17" fill="#5f97ea"/><path d="M18 18L3.3 9.5A17 17 0 0 1 32.7 9.5z" fill="#3b78dc"/><path d="M18 18L32.7 9.5A17 17 0 0 1 18 35z" fill="#a9c8f6"/><circle cx="18" cy="18" r="8" fill="#fff"/><circle cx="18" cy="18" r="6.3" fill="#2a73e0"/></svg><svg class="a" style="left:62.0px;top:1037.0px" width="34" height="34" viewBox="0 0 34 34"><defs><linearGradient id="ff" x1="0" y1="0" x2="0" y2="1"><stop offset="0" stop-color="#ffd23a"/><stop offset="0.5" stop-color="#ff7a1a"/><stop offset="1" stop-color="#f0306a"/></linearGradient></defs><path d="M17 32a14 14 0 0 1-14-14c0-4 1.5-7 3.5-9 0 2 1 3 2 3.5C9 7 13 3 19 1c-1 3 0 5 2 6 5 2 9 6 9 11a14 14 0 0 1-13 14z" fill="url(#ff)"/><circle cx="17.5" cy="19" r="6.5" fill="#7a3fd8"/><path d="M10 15c3-3 9-3 11 0-3-1-6 0-8 2z" fill="#ff9a2a"/></svg><svg class="a" style="left:112.0px;top:1037.0px" width="34" height="34" viewBox="0 0 34 34"><circle cx="17" cy="18" r="14" fill="#1f6fd0"/><path d="M4 10c3 10 10 16 20 14" stroke="#0a4aa5" stroke-width="4" fill="none"/><ellipse cx="19" cy="18" rx="8" ry="6" fill="#d9e7f7"/><path d="M12 15l7 4 7-4" stroke="#6b9ad8" stroke-width="1.2" fill="none"/></svg><svg class="a" style="left:162.0px;top:1037.0px" width="34" height="34" viewBox="0 0 34 34"><path d="M2 6h10l2 2h18v22H2z" fill="#9b4f6a"/><rect x="2" y="10" width="30" height="20" rx="2" fill="#cfcfcf"/><rect x="13" y="14" width="8" height="2" fill="#888"/></svg><div class="a" style="left:180px;top:1034px;width:20px;height:20px;border-radius:10px;background:#1b9e2c;color:#fff;font-size:12px;line-height:20px;text-align:center">1</div><div class="a" style="left:169px;top:1073px;width:4px;height:4px;border-radius:2px;background:#e95420"></div><div class="a" style="left:177px;top:1073px;width:4px;height:4px;border-radius:2px;background:#e95420"></div><div class="a" style="left:185px;top:1073px;width:4px;height:4px;border-radius:2px;background:#e95420"></div><svg class="a" style="left:214.0px;top:1037.0px" width="30" height="34" viewBox="0 0 30 34"><rect x="1" y="1" width="28" height="32" rx="3" fill="#e8e2d0"/><circle cx="15" cy="17" r="10" fill="#222"/><circle cx="15" cy="17" r="7.5" fill="#e8c72c"/><circle cx="15" cy="17" r="3" fill="#222"/></svg><svg class="a" style="left:264.0px;top:1037.0px" width="30" height="34" viewBox="0 0 30 34"><path d="M4 1h18l7 7v21a4 4 0 0 1-4 4H4a4 4 0 0 1-4-4V5a4 4 0 0 1 4-4z" fill="#2f8fc0"/><path d="M22 1l7 7h-7z" fill="#1b5f88"/><rect x="11" y="12" width="12" height="7" rx="1.5" fill="none" stroke="#cfe6f5" stroke-width="1.2"/><path d="M13 18l3-3 2 2 1-1 3 2" stroke="#cfe6f5" stroke-width="0.9" fill="none"/><path d="M5 13h5M5 17h5M5 21h19M5 25h19M5 29h14" stroke="#fff" stroke-width="1.3"/></svg><svg class="a" style="left:315.0px;top:1037.0px" width="28" height="34" viewBox="0 0 28 34"><rect x="1" y="3" width="26" height="30" rx="2" fill="#f0622c"/><path d="M9 3a5 5 0 0 0 10 0" stroke="#fff" stroke-width="1.5" fill="none"/><path d="M8 28l6-16 6 16M10 22h8M6 28h16" stroke="#fff" stroke-width="2" fill="none"/></svg><svg class="a" style="left:362.0px;top:1037.0px" width="34" height="34" viewBox="0 0 34 34"><circle cx="17" cy="17" r="16" fill="#3a93d8"/><text x="17" y="25" font-size="22" fill="#fff" text-anchor="middle" font-family="Liberation Sans">?</text></svg><svg class="a" style="left:413.0px;top:1038.0px" width="32" height="32" viewBox="0 0 32 32"><path d="M23 1l8 4v22l-8 4-14-12-5 4-3-2V11l3-2 5 4zM23 9l-8 7 8 7z" fill="#1e8ad8" fill-rule="evenodd"/></svg><svg class="a" style="left:462.0px;top:1047.0px" width="34" height="14" viewBox="0 0 34 14"><path d="M0 1h4l3 9 4-9h2l-5 12H5z" fill="#8a5a6a"/><path d="M10 13L15 1h3l3 8 4-8h3l5 12h-3l-3-8-4 8h-2l-3-8-3 8z" fill="#9a9a9a"/></svg><svg class="a" style="left:513.0px;top:1037.0px" width="32" height="34" viewBox="0 0 32 34"><rect x="2" y="2" width="26" height="30" rx="3" fill="#f2f2f2"/><rect x="2" y="2" width="26" height="6" rx="3" fill="#3d7de0"/><path d="M6 14h16M6 18h16M6 22h12" stroke="#aaa" stroke-width="1"/><path d="M12 26l16-16 3 3-16 16-4 1z" fill="#f3b72c" stroke="#8a5a00" stroke-width="0.6"/></svg><div class="a" style="left:555px;top:1038px;width:1px;height:32px;background:#5a4a4e"></div><svg class="a" style="left:566.0px;top:1040.0px" width="32" height="28" viewBox="0 0 32 28"><rect x="0.5" y="0.5" width="31" height="27" rx="4" fill="#474747" stroke="#5a5a5a"/><path d="M5 6l4 2.5-4 2.5M10 12h5" stroke="#fff" stroke-width="1.2" fill="none"/></svg><div class="a" style="left:576px;top:1073px;width:4px;height:4px;border-radius:2px;background:#e95420"></div><div class="a" style="left:584px;top:1073px;width:4px;height:4px;border-radius:2px;background:#e95420"></div><svg class="a" style="left:616.0px;top:1038.0px" width="32" height="32" viewBox="0 0 32 32"><defs><linearGradient id="sg" x1="0" y1="0" x2="0" y2="1"><stop offset="0" stop-color="#c4c4c4"/><stop offset="1" stop-color="#8c8c8c"/></linearGradient></defs><rect x="0.5" y="0.5" width="31" height="31" rx="5" fill="url(#sg)"/><circle cx="16" cy="16" r="9.5" fill="none" stroke="#f2f2f2" stroke-width="4.5" stroke-dasharray="2.6 2.4"/><circle cx="16" cy="16" r="7" fill="none" stroke="#f2f2f2" stroke-width="3"/></svg><div class="a" style="left:630px;top:1073px;width:4px;height:4px;border-radius:2px;background:#e95420"></div><div class="a" style="left:659px;top:1031px;width:46px;height:46px;border-radius:9px;background:#4a393d"></div><svg class="a" style="left:668.0px;top:1037.0px" width="28" height="34" viewBox="0 0 28 34"><path d="M3 1h17l7 7v23a2 2 0 0 1-2 2H3a2 2 0 0 1-2-2V3a2 2 0 0 1 2-2z" fill="#1e9a30"/><path d="M20 1l7 7h-7z" fill="#5cc46a"/><path d="M14 1l13 13V8l-7-7z" fill="#2aa83c" opacity="0.6"/><rect x="5" y="13" width="17" height="14" fill="none" stroke="#fff" stroke-width="1.1"/><path d="M5 16.5h17M5 20h17M5 23.5h12M9.5 13v14M14 13v14" stroke="#fff" stroke-width="1"/><path d="M17.5 27v-4M20 27v-6" stroke="#fff" stroke-width="1.4"/></svg><div class="a" style="left:680px;top:1073px;width:4px;height:4px;border-radius:2px;background:#e95420"></div><svg class="a" style="left:715.0px;top:1037.0px" width="34" height="34" viewBox="0 0 34 34"><path d="M2 4h11l2 2h17v20H2z" fill="#9b4f6a"/><path d="M24 6h8v4z" fill="#e95420"/><rect x="2" y="9" width="30" height="19" rx="2" fill="#8d8d8d"/><path d="M1 32h32M17 28v4" stroke="#bbb" stroke-width="1.2"/></svg><svg class="a" style="left:765.0px;top:1037.0px" width="34" height="34" viewBox="0 0 34 34"><path d="M2 4h11l2 2h17v20H2z" fill="#9b4f6a"/><path d="M24 6h8v4z" fill="#e95420"/><rect x="2" y="9" width="30" height="19" rx="2" fill="#8d8d8d"/><path d="M1 32h32M17 28v4" stroke="#bbb" stroke-width="1.2"/></svg><svg class="a" style="left:815.0px;top:1037.0px" width="34" height="34" viewBox="0 0 34 34"><path d="M2 4h11l2 2h17v20H2z" fill="#9b4f6a"/><path d="M24 6h8v4z" fill="#e95420"/><rect x="2" y="9" width="30" height="19" rx="2" fill="#8d8d8d"/><path d="M1 32h32M17 28v4" stroke="#bbb" stroke-width="1.2"/></svg><svg class="a" style="left:868.0px;top:1037.0px" width="28" height="34" viewBox="0 0 28 34"><rect x="2" y="4" width="24" height="29" rx="3" fill="#e2e2e2"/><rect x="4" y="1.5" width="20" height="4.5" rx="1" fill="#fafafa" stroke="#bdbdbd" stroke-width="0.6"/><path d="M11 14l3-4 3 4M19 17l1.5 4.5H15.5M9 21.5H7.5L10 17" stroke="#2f9a2f" stroke-width="2" fill="none" stroke-linejoin="round"/></svg><svg class="a" style="left:1877.0px;top:1040.0px" width="28" height="28" viewBox="0 0 28 28"><circle cx="14" cy="14" r="9.5" fill="none" stroke="#fff" stroke-width="3" stroke-dasharray="13 2"/><circle cx="14" cy="4" r="3" fill="#fff"/><circle cx="5" cy="19" r="3" fill="#fff"/><circle cx="23" cy="19" r="3" fill="#fff"/></svg></body></html>
